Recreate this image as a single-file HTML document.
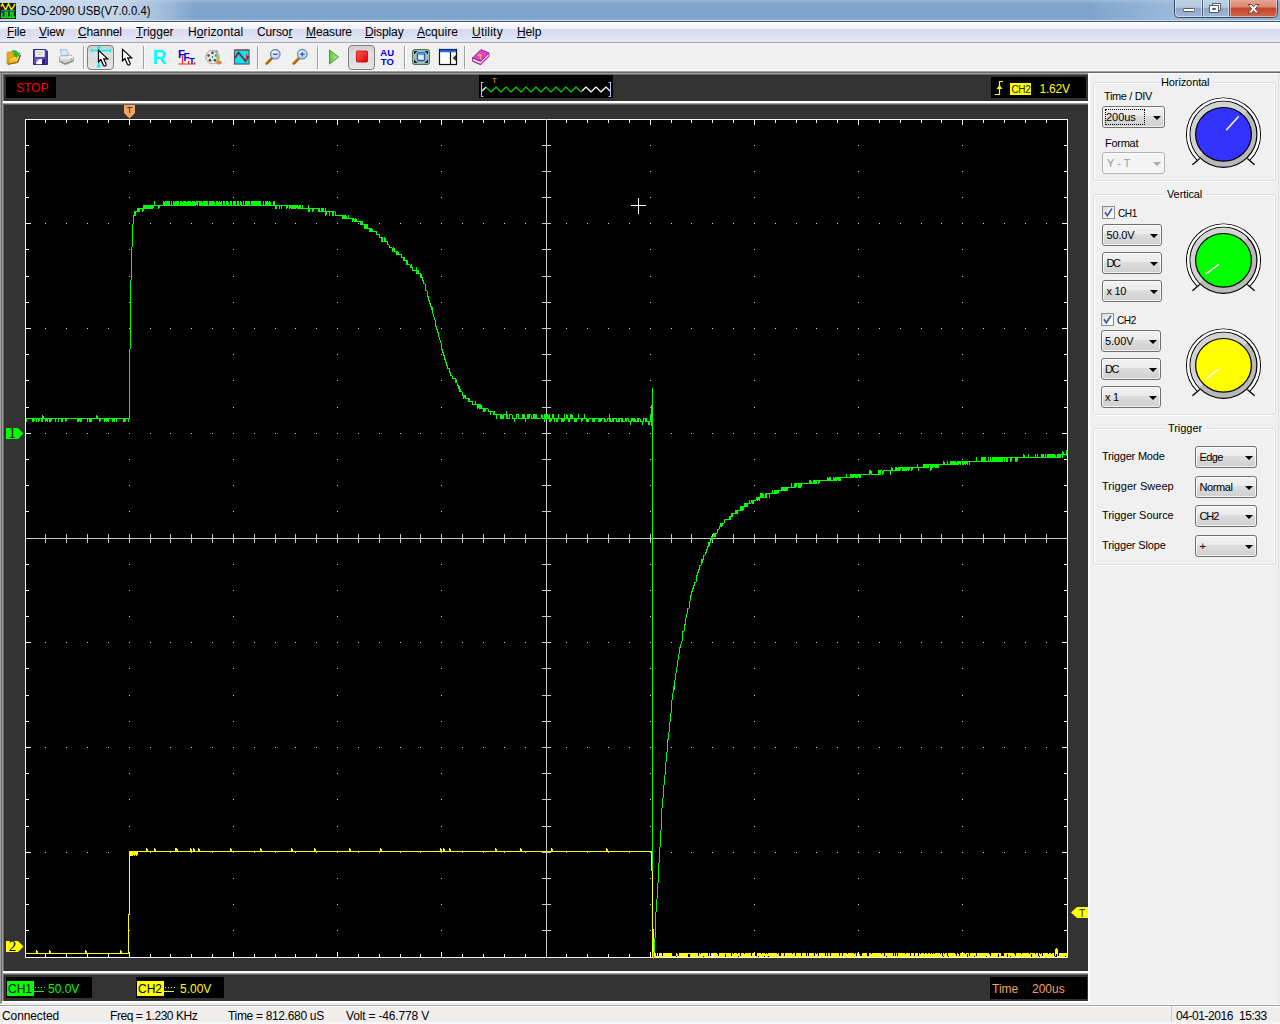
<!DOCTYPE html>
<html lang="en">
<head>
<meta charset="utf-8">
<title>DSO-2090 USB(V7.0.0.4)</title>
<style>
*{box-sizing:border-box;margin:0;padding:0}
html,body{width:1280px;height:1024px;overflow:hidden;background:#f0f0f0;font-family:"Liberation Sans",sans-serif;font-size:12px;color:#000}
.abs{position:absolute}
#titlebar{position:absolute;left:0;top:0;width:1280px;height:22px;background:linear-gradient(#9dbadb 0,#86a9cf 12%,#7fa4cc 25%,#7fa4cc 88%,#cfdcee 93%,#cfdcee 95%,#46586f 96%);}
#titleglow{position:absolute;left:0;top:0;width:195px;height:20px;background:linear-gradient(90deg,rgba(208,223,240,.8) 0,rgba(208,223,240,.85) 60%,rgba(208,223,240,.5) 80%,rgba(208,223,240,0) 100%)}
#titleglow2{position:absolute;left:1090px;top:0;width:190px;height:20px;background:linear-gradient(100deg,rgba(190,212,234,0) 0,rgba(190,212,234,.45) 45%,rgba(175,200,228,.35) 70%,rgba(175,200,228,.3) 100%)}
#title{position:absolute;left:21px;top:3px;font-size:13px;line-height:16px;white-space:nowrap;transform:scaleX(.87);transform-origin:0 0}
#menubar{position:absolute;left:0;top:22px;width:1280px;height:21px;background:linear-gradient(#fdfdfe 0,#f1f3fa 35%,#d9dbee 36%,#dde0f1 70%,#e6e9f6 100%);border-bottom:1px solid #a8a8a8}
#menubar span{position:absolute;top:3px;line-height:15px;font-size:12px;white-space:nowrap;letter-spacing:-.12px}
#menubar u{text-decoration:underline;text-underline-offset:1px}
#toolbar{position:absolute;left:0;top:43px;width:1280px;height:28px;background:#f0f0f0}
.sep{position:absolute;top:3px;width:2px;height:23px;background:linear-gradient(90deg,#a0a0a0 50%,#fff 50%)}
.pressed{position:absolute;top:2px;width:27px;height:25px;border:1px solid #7f7f7f;border-radius:4px;background:linear-gradient(#cfcfcf,#e3e3e3 45%,#dadada 50%,#e6e6e6)}
.ico{position:absolute;top:5px;width:18px;height:18px}
#scope{position:absolute;left:0;top:73px;width:1088px;height:928px;background:#333}
.blk{position:absolute;background:#000}
.sepw{position:absolute;left:3px;width:1085px;height:4px;background:linear-gradient(#fff 0,#fff 50%,#a0a0a0 50%,#a0a0a0 75%,#606060 75%)}
#panel{position:absolute;left:1088px;top:73px;width:192px;height:931px;background:#f0f0f0}
.gb{position:absolute;border:1px solid #d5dfe5;border-radius:3px}
.gbw{position:absolute;border:1px solid #fff;border-radius:3px}
.gbt{position:absolute;font-size:11px;line-height:13px;background:#f0f0f0;padding:0 2px;white-space:nowrap}
.lbl{position:absolute;font-size:11px;line-height:13px;white-space:nowrap}
.cb{position:absolute;height:22px;border:1px solid #707070;border-radius:3px;background:linear-gradient(#f2f2f2 0,#ebebeb 43%,#dddddd 47%,#cfcfcf 100%);box-shadow:inset 0 0 0 1px rgba(255,255,255,.75);font-size:11px;line-height:13px}
.cb b{position:absolute;left:4px;top:4px;font-weight:normal;white-space:nowrap}
.cb i{position:absolute;right:3.5px;top:9px;width:0;height:0;border-left:4px solid transparent;border-right:4px solid transparent;border-top:4px solid #000}
.cb.dis{background:#f4f4f4;border-color:#adb2b5;color:#9a9a9a}
.cb.dis i{border-top-color:#a8a8a8}
.chk{position:absolute;width:13px;height:13px;border:1px solid #8e8f8f;background:linear-gradient(135deg,#d6d9dc,#f4f5f6 60%,#fff)}
#status{position:absolute;left:0;top:1006px;width:1280px;height:18px;background:#f0eded;border-top:1px solid #fff}
#status span{position:absolute;top:2px;line-height:15px;font-size:12px;white-space:nowrap}
.sc{position:absolute;font-size:12px;line-height:14px;white-space:nowrap}
</style>
</head>
<body>
<!-- ===== title bar ===== -->
<div id="titlebar">
 <div id="titleglow"></div><div id="titleglow2"></div>
 <svg class="abs" style="left:0;top:3px" width="16" height="16" viewBox="0 0 16 16">
  <rect width="16" height="16" fill="#1a1a1a"/>
  <polyline points="1,3.500 2.500,1 5.500,7 8.500,1 11.500,7 15,1" fill="none" stroke="#e6e600" stroke-width="1.500"/>
  <rect x="1" y="7" width="14" height="1.500" fill="#168a8a"/>
  <path d="M1.800 9.500V14.300H5.300V9.500H7.300V14.300H10.800V9.500H12.800V14.300H15" fill="none" stroke="#14e014" stroke-width="1.700"/>
 </svg>
 <div id="title">DSO-2090 USB(V7.0.0.4)</div>
 <svg class="abs" style="left:1170px;top:0" width="110" height="22" viewBox="1170 0 110 22">
 <defs>
  <linearGradient id="wb1" x1="0" y1="0" x2="0" y2="1"><stop offset="0" stop-color="#c3d3e6"/><stop offset=".45" stop-color="#b4c7de"/><stop offset=".5" stop-color="#8fa9c8"/><stop offset="1" stop-color="#9fb8d6"/></linearGradient>
  <linearGradient id="wb2" x1="0" y1="0" x2="0" y2="1"><stop offset="0" stop-color="#e9a99c"/><stop offset=".45" stop-color="#d98672"/><stop offset=".5" stop-color="#c5452a"/><stop offset="1" stop-color="#d0674a"/></linearGradient>
 </defs>
 <path d="M1174.500 -1V13.500Q1174.500 17.500 1178.500 17.500H1273.500Q1277.500 17.500 1277.500 13.500V-1z" fill="url(#wb1)" stroke="#3a4a60" stroke-width="1"/>
 <path d="M1229.500 -1V17H1273.500Q1277 17 1277 13.500V-1z" fill="url(#wb2)"/>
 <path d="M1202.500 0V17M1229.500 0V17" stroke="#4a5a72" stroke-width="1"/>
 <path d="M1175.500 0V13.500Q1175.500 16.500 1178.500 16.500H1273.500Q1276.500 16.500 1276.500 13.500V0M1203.500 0V16.500M1230.500 0V16.500M1201.500 0V16.500M1228.500 0V16.500" fill="none" stroke="rgba(255,255,255,.45)" stroke-width="1"/>
 <rect x="1183.500" y="8.500" width="11" height="3" rx="1" fill="#fff" stroke="#535a66" stroke-width="1"/>
 <path d="M1212.500 3.500h8v7h-2v-5h-6z" fill="#fff" stroke="#535a66" stroke-width="1"/>
 <path d="M1209.500 5.500h9v7h-9zM1212.500 8.500h3v1h-3z" fill="#fff" stroke="#535a66" stroke-width="1" fill-rule="evenodd"/>
 <path d="M1248 4.500h3.500l2 2.400l2-2.400h3.500l-3.700 4.300l3.700 4.200h-3.500l-2-2.400l-2 2.400h-3.500l3.700-4.200z" fill="#fff" stroke="#5a3a3a" stroke-width=".9"/>
</svg>
</div>
<!-- ===== menu bar ===== -->
<div id="menubar">
 <span style="left:7px"><u>F</u>ile</span>
 <span style="left:39px"><u>V</u>iew</span>
 <span style="left:78px"><u>C</u>hannel</span>
 <span style="left:136px;letter-spacing:0"><u>T</u>rigger</span>
 <span style="left:188px;letter-spacing:.12px">H<u>o</u>rizontal</span>
 <span style="left:257px">Curso<u>r</u></span>
 <span style="left:306px"><u>M</u>easure</span>
 <span style="left:365px"><u>D</u>isplay</span>
 <span style="left:417px;letter-spacing:.03px"><u>A</u>cquire</span>
 <span style="left:472px;letter-spacing:.22px"><u>U</u>tility</span>
 <span style="left:517px"><u>H</u>elp</span>
</div>
<!-- ===== toolbar ===== -->
<div id="toolbar">
 <div class="sep" style="left:83px"></div>
 <div class="pressed" style="left:87px"></div>
 <div class="sep" style="left:143px"></div>
 <div class="sep" style="left:257px"></div>
 <div class="sep" style="left:317px"></div>
 <div class="pressed" style="left:348px"></div>
 <div class="sep" style="left:404px"></div>
 <div class="sep" style="left:464px"></div>
 <svg class="abs" style="left:0;top:0" width="500" height="28" viewBox="0 43 500 28">
 <defs>
  <linearGradient id="fy" x1="0" y1="0" x2="0" y2="1"><stop offset="0" stop-color="#ffe96a"/><stop offset="1" stop-color="#e9a800"/></linearGradient>
  <linearGradient id="pg" x1="0" y1="0" x2="0" y2="1"><stop offset="0" stop-color="#f4f4f4"/><stop offset="1" stop-color="#b9bcc0"/></linearGradient>
  <radialGradient id="mg" cx=".4" cy=".35" r=".7"><stop offset="0" stop-color="#fff"/><stop offset="1" stop-color="#a8c8ee"/></radialGradient>
  <linearGradient id="pl" x1="0" y1="0" x2="1" y2="0"><stop offset="0" stop-color="#58c83c"/><stop offset="1" stop-color="#b8f090"/></linearGradient>
  <linearGradient id="rd" x1="0" y1="0" x2="1" y2="1"><stop offset="0" stop-color="#ff5a5a"/><stop offset="1" stop-color="#e00000"/></linearGradient>
 </defs>
 <!-- open -->
 <path d="M7 52.800q0-.8 .8-.8h3.400l1 1h3.300v4.500l-8.500 6.500z" fill="#e8ac10" stroke="#c08600" stroke-width=".6"/>
 <path d="M7.600 64.300l1.700-6.400l11-2.800l-2.800 7.300z" fill="url(#fy)" stroke="#9a6c00" stroke-width=".5"/>
 <path d="M17.600 62.600l2.900-7.500" stroke="#2a1c00" stroke-width=".9"/>
 <path d="M8 64.400l9.500-1.900" stroke="#6a4a00" stroke-width=".8"/>
 <path d="M11.300 51.600q4.700-2.700 7.400 1.900l1.700-.6l-3.900 4.600l-3-3.300l1.900-.2q-1.200-2-4.100-2.400z" fill="#28c028" stroke="#168a16" stroke-width=".5"/>
 <!-- save -->
 <path d="M33.500 49.500h12.300l1.500 1.500v13.400h-13.800z" fill="#5a48b4" stroke="#2c2c8c" stroke-width="1"/>
 <path d="M47 51.500v13h-13" fill="none" stroke="#22225e" stroke-width="1"/>
 <rect x="35.200" y="50.100" width="9.400" height="6.800" fill="#f6f6f6"/>
 <path d="M37.200 52.400h5.600M37.200 54.400h5.600" stroke="#b8b8b8" stroke-width=".9"/>
 <rect x="36.200" y="59" width="5.800" height="5.200" fill="#fff"/>
 <path d="M36.200 59h3.500l-3.500 3.500z" fill="#8c84d4"/>
 <rect x="42.400" y="59" width="2.600" height="5.200" fill="#2a1a90"/>
 <!-- print -->
 <path d="M60.400 49.400h6.400l1.700 5.700l-7.100 .5z" fill="#d4e8fb" stroke="#8c9cc8" stroke-width=".6"/>
 <path d="M59.400 58q0-1.500 1.500-1.900l9.800-1q1.200 0 2.600 2.200v4.200l-8.200 3.200l-5.700-3z" fill="url(#pg)" stroke="#8a8e9a" stroke-width=".6"/>
 <path d="M59.600 61.200l5.600 2.700l8-3.200" fill="none" stroke="#70747c" stroke-width=".9"/>
 <path d="M60.500 57l5.500 1.600l7-2" fill="none" stroke="#fff" stroke-width=".8"/>
 <rect x="70.700" y="58.800" width="1.500" height="1.500" fill="#4cd04c"/>
 <!-- cursor cross -->
 <path d="M91 50.500h20M91.500 49v3M110.500 49v3" stroke="#00f4f4" stroke-width="1.500" fill="none"/>
 <path d="M98.800 47v20M97 47.500h3.600M97 66.500h3.600" stroke="#00f4f4" stroke-width="1.800" fill="none"/>
 <path d="M98.500 50.300V61.800L100.900 59.600L103.400 65.300Q104.300 66.400 105.600 65.700Q106.600 65 106 63.800L103.700 58.900H107.700Z" fill="#fff" stroke="#000" stroke-width="1.200"/>
 <path d="M122.500 49.300V60.800L124.900 58.600L127.400 64.300Q128.300 65.400 129.600 64.700Q130.600 64 130 62.800L127.700 57.900H131.700Z" fill="#fff" stroke="#000" stroke-width="1.200"/>
 <!-- R -->
 <text x="152.500" y="64.300" font-family="Liberation Sans,sans-serif" font-weight="bold" font-size="19.500" fill="#00ffff">R</text>
 <!-- FFT -->
 <g font-family="Liberation Sans,sans-serif" font-weight="bold" fill="#0000e6">
  <text x="178" y="57.500" font-size="11.500">F</text><text x="183.500" y="61" font-size="10">F</text><text x="189" y="63.500" font-size="9.500">T</text>
 </g>
 <path d="M178.500 64h17M182.500 64v-9M188.500 64v-3M194.500 64v-2" stroke="#ff2020" stroke-width="1.1" fill="none"/>
 <!-- film -->
 <circle cx="212.500" cy="57" r="6.800" fill="#e4e4e4" stroke="#9a9a9a" stroke-width=".8"/>
 <g fill="#444"><circle cx="212.500" cy="52.800" r="1.300"/><circle cx="208.600" cy="55.500" r="1.300"/><circle cx="210" cy="60.200" r="1.300"/><circle cx="215" cy="60.200" r="1.300"/><circle cx="216.400" cy="55.500" r="1.300"/><circle cx="212.500" cy="57" r=".8"/></g>
 <path d="M216 52q2.500 1 2.500 4.500l1.500 5.500l-3 2z" fill="#8ad04a"/>
 <path d="M216 62q3-2.500 6 0q0 2.500-3.500 2.500q-2.500 0-2.500-2.500z" fill="#e88050"/>
 <circle cx="216.500" cy="51.500" r="1.600" fill="#8aa0e0"/>
 <!-- wave icon -->
 <rect x="234.500" y="50" width="14.500" height="14" fill="#00e8f0" stroke="#555a66" stroke-width="1.200"/>
 <path d="M234.500 50h14.500" stroke="#a04040" stroke-width="1"/>
 <path d="M235 58l3.500-5.500l7 8.500l3-5" fill="none" stroke="#3a3a3a" stroke-width="1.800"/>
 <path d="M236 57.500l2.500-3.500l7 8" fill="none" stroke="#ff2080" stroke-width=".8"/>
 <path d="M246.500 54v6" stroke="#ff2020" stroke-width="1"/>
 <!-- zoom out/in -->
 <g>
  <path d="M266.500 63.500l5.500-5.500" stroke="#c87800" stroke-width="2.600" stroke-linecap="round"/><path d="M267 64.300l5.200-5.200" stroke="#5a3a10" stroke-width=".8"/>
  <circle cx="275.300" cy="54.200" r="4.700" fill="url(#mg)" stroke="#6a88b4" stroke-width="1.300"/>
  <path d="M273 54.200h4.600" stroke="#3a6ac8" stroke-width="1.500"/>
  <path d="M293.500 63.500l5.500-5.500" stroke="#c87800" stroke-width="2.600" stroke-linecap="round"/><path d="M294 64.300l5.200-5.200" stroke="#5a3a10" stroke-width=".8"/>
  <circle cx="302.300" cy="54.200" r="4.700" fill="url(#mg)" stroke="#6a88b4" stroke-width="1.300"/>
  <path d="M300 54.200h4.600M302.300 51.900v4.600" stroke="#3a6ac8" stroke-width="1.500"/>
 </g>
 <!-- play -->
 <path d="M329.500 50l9 7l-9 7z" fill="url(#pl)" stroke="#3aa028" stroke-width="1"/>
 <!-- stop -->
 <rect x="356.500" y="51" width="11" height="11" rx="1" fill="url(#rd)" stroke="#c00000" stroke-width=".8"/>
 <!-- AUTO -->
 <g font-family="Liberation Sans,sans-serif" font-weight="bold" font-size="9.500" fill="#0000f0">
  <text x="380.300" y="56">AU</text><text x="380.800" y="64.500">TO</text>
 </g>
 <!-- fullscreen -->
 <rect x="412.500" y="49.500" width="17" height="15" rx="2" fill="#9cc0b0" stroke="#4a7060" stroke-width="1"/>
 <path d="M414 51h3.500l-3.500 3.500zM428 51h-3.500l3.500 3.500zM414 63h3.500l-3.500-3.500zM428 63h-3.500l3.500-3.500z" fill="#111"/>
 <rect x="417.500" y="53" width="7" height="7.500" rx="1" fill="#f4ece4" stroke="#1858e0" stroke-width="1.300"/>
 <rect x="418" y="53.500" width="6" height="1.600" fill="#58a8f8"/>
 <!-- window -->
 <rect x="439.500" y="49.500" width="17" height="15" fill="#fff" stroke="#111" stroke-width="1.200"/>
 <rect x="440" y="49.500" width="16" height="2.500" fill="#1c50e8"/>
 <path d="M440 52.200h16" stroke="#40d8f0" stroke-width=".8"/>
 <path d="M450.500 52v12.500" stroke="#111" stroke-width="1.200"/>
 <path d="M456 55l-3.500 3l3.500 3z" fill="#333"/>
 <!-- book -->
 <path d="M472.500 58l8.500-8.500l8 3.500l-8.500 8.500z" fill="#e838d8" stroke="#701870" stroke-width=".8"/>
 <path d="M472.500 58v3l8 3.500l8.500-8.500v-3l-8.500 8.500z" fill="#f0f0e0" stroke="#701870" stroke-width=".8"/>
 <path d="M472.500 61l8 3.500l8.500-8.500" fill="none" stroke="#c020b0" stroke-width="1.200"/>
 <text x="478" y="59" font-family="Liberation Sans,sans-serif" font-weight="bold" font-size="7" fill="#f0f000" transform="rotate(-20 480 57)">?</text>
</svg>
</div>
<div class="abs" style="left:0;top:70px;width:1280px;height:1px;background:#fbfbfb"></div>
<div class="abs" style="left:0;top:71px;width:1280px;height:1px;background:#a0a0a0"></div>
<div class="abs" style="left:0;top:72px;width:1280px;height:1px;background:#696969"></div>
<!-- ===== scope area ===== -->
<div id="scope">
 <div class="abs" style="left:0;top:0;width:1088px;height:1px;background:#a0a0a0"></div>
 <div class="abs" style="left:0;top:1px;width:1088px;height:1px;background:#666"></div>
 <div class="abs" style="left:0;top:2px;width:1088px;height:1px;background:#303030"></div>
 <div class="abs" style="left:0;top:0;width:1px;height:931px;background:#a0a0a0"></div>
 <div class="abs" style="left:1px;top:0;width:1px;height:930px;background:#696969"></div>
 <div class="abs" style="left:2px;top:0;width:1px;height:929px;background:#a0a0a0"></div>
 <div class="abs" style="left:3px;top:1px;width:1px;height:927px;background:#666"></div>
 <div class="abs" style="left:4px;top:2px;width:1px;height:926px;background:#303030"></div>
</div>
<div class="blk" style="left:6px;top:77px;width:50px;height:21px"></div>
<div class="sc" style="left:16px;top:81px;color:#f00">STOP</div>
<div class="blk" style="left:479px;top:75px;width:134px;height:23px"></div>
<div class="blk" style="left:991px;top:77px;width:95px;height:21px"></div>
<div class="sepw" style="top:101px"></div>
<div class="sepw" style="top:971px"></div>
<div class="blk" style="left:6px;top:977px;width:86px;height:21px"></div>
<div class="blk" style="left:136px;top:977px;width:88px;height:21px"></div>
<div class="blk" style="left:990px;top:977px;width:97px;height:22px"></div>
<!-- scope graphics -->
<svg class="abs" style="left:0;top:0" width="1090" height="1004" viewBox="0 0 1090 1004">
 <rect x="25" y="119" width="1043" height="839" fill="#000"/>
 <g shape-rendering="crispEdges">
  <path d="M25 119h1043v1h-1043zM25 957h1043v1h-1043zM25 119h1v839h-1zM1067 119h1v839h-1zM45 119h1v4h-1zM45 954h1v4h-1zM66 119h1v4h-1zM66 954h1v4h-1zM87 119h1v4h-1zM87 954h1v4h-1zM108 119h1v4h-1zM108 954h1v4h-1zM129 119h1v6h-1zM129 952h1v6h-1zM150 119h1v4h-1zM150 954h1v4h-1zM170 119h1v4h-1zM170 954h1v4h-1zM191 119h1v4h-1zM191 954h1v4h-1zM212 119h1v4h-1zM212 954h1v4h-1zM233 119h1v6h-1zM233 952h1v6h-1zM254 119h1v4h-1zM254 954h1v4h-1zM275 119h1v4h-1zM275 954h1v4h-1zM295 119h1v4h-1zM295 954h1v4h-1zM316 119h1v4h-1zM316 954h1v4h-1zM337 119h1v6h-1zM337 952h1v6h-1zM358 119h1v4h-1zM358 954h1v4h-1zM379 119h1v4h-1zM379 954h1v4h-1zM400 119h1v4h-1zM400 954h1v4h-1zM420 119h1v4h-1zM420 954h1v4h-1zM441 119h1v6h-1zM441 952h1v6h-1zM462 119h1v4h-1zM462 954h1v4h-1zM483 119h1v4h-1zM483 954h1v4h-1zM504 119h1v4h-1zM504 954h1v4h-1zM525 119h1v4h-1zM525 954h1v4h-1zM546 119h1v6h-1zM546 952h1v6h-1zM566 119h1v4h-1zM566 954h1v4h-1zM587 119h1v4h-1zM587 954h1v4h-1zM608 119h1v4h-1zM608 954h1v4h-1zM629 119h1v4h-1zM629 954h1v4h-1zM650 119h1v6h-1zM650 952h1v6h-1zM671 119h1v4h-1zM671 954h1v4h-1zM691 119h1v4h-1zM691 954h1v4h-1zM712 119h1v4h-1zM712 954h1v4h-1zM733 119h1v4h-1zM733 954h1v4h-1zM754 119h1v6h-1zM754 952h1v6h-1zM775 119h1v4h-1zM775 954h1v4h-1zM796 119h1v4h-1zM796 954h1v4h-1zM816 119h1v4h-1zM816 954h1v4h-1zM837 119h1v4h-1zM837 954h1v4h-1zM858 119h1v6h-1zM858 952h1v6h-1zM879 119h1v4h-1zM879 954h1v4h-1zM900 119h1v4h-1zM900 954h1v4h-1zM921 119h1v4h-1zM921 954h1v4h-1zM941 119h1v4h-1zM941 954h1v4h-1zM962 119h1v6h-1zM962 952h1v6h-1zM983 119h1v4h-1zM983 954h1v4h-1zM1004 119h1v4h-1zM1004 954h1v4h-1zM1025 119h1v4h-1zM1025 954h1v4h-1zM1046 119h1v4h-1zM1046 954h1v4h-1zM25 145h4v1h-4zM1064 145h4v1h-4zM25 171h4v1h-4zM1064 171h4v1h-4zM25 197h4v1h-4zM1064 197h4v1h-4zM25 223h6v1h-6zM1062 223h6v1h-6zM25 249h4v1h-4zM1064 249h4v1h-4zM25 276h4v1h-4zM1064 276h4v1h-4zM25 302h4v1h-4zM1064 302h4v1h-4zM25 328h6v1h-6zM1062 328h6v1h-6zM25 354h4v1h-4zM1064 354h4v1h-4zM25 380h4v1h-4zM1064 380h4v1h-4zM25 407h4v1h-4zM1064 407h4v1h-4zM25 433h6v1h-6zM1062 433h6v1h-6zM25 459h4v1h-4zM1064 459h4v1h-4zM25 485h4v1h-4zM1064 485h4v1h-4zM25 511h4v1h-4zM1064 511h4v1h-4zM25 538h6v1h-6zM1062 538h6v1h-6zM25 564h4v1h-4zM1064 564h4v1h-4zM25 590h4v1h-4zM1064 590h4v1h-4zM25 616h4v1h-4zM1064 616h4v1h-4zM25 642h6v1h-6zM1062 642h6v1h-6zM25 668h4v1h-4zM1064 668h4v1h-4zM25 695h4v1h-4zM1064 695h4v1h-4zM25 721h4v1h-4zM1064 721h4v1h-4zM25 747h6v1h-6zM1062 747h6v1h-6zM25 773h4v1h-4zM1064 773h4v1h-4zM25 799h4v1h-4zM1064 799h4v1h-4zM25 826h4v1h-4zM1064 826h4v1h-4zM25 852h6v1h-6zM1062 852h6v1h-6zM25 878h4v1h-4zM1064 878h4v1h-4zM25 904h4v1h-4zM1064 904h4v1h-4zM25 930h4v1h-4zM1064 930h4v1h-4z" fill="#f4f4f4"/>
  <path d="M25 538h1043v1h-1043zM546 119h1v839h-1zM45 534h1v9h-1zM66 534h1v9h-1zM87 534h1v9h-1zM108 534h1v9h-1zM129 534h1v9h-1zM150 534h1v9h-1zM170 534h1v9h-1zM191 534h1v9h-1zM212 534h1v9h-1zM233 534h1v9h-1zM254 534h1v9h-1zM275 534h1v9h-1zM295 534h1v9h-1zM316 534h1v9h-1zM337 534h1v9h-1zM358 534h1v9h-1zM379 534h1v9h-1zM400 534h1v9h-1zM420 534h1v9h-1zM441 534h1v9h-1zM462 534h1v9h-1zM483 534h1v9h-1zM504 534h1v9h-1zM525 534h1v9h-1zM546 534h1v9h-1zM566 534h1v9h-1zM587 534h1v9h-1zM608 534h1v9h-1zM629 534h1v9h-1zM650 534h1v9h-1zM671 534h1v9h-1zM691 534h1v9h-1zM712 534h1v9h-1zM733 534h1v9h-1zM754 534h1v9h-1zM775 534h1v9h-1zM796 534h1v9h-1zM816 534h1v9h-1zM837 534h1v9h-1zM858 534h1v9h-1zM879 534h1v9h-1zM900 534h1v9h-1zM921 534h1v9h-1zM941 534h1v9h-1zM962 534h1v9h-1zM983 534h1v9h-1zM1004 534h1v9h-1zM1025 534h1v9h-1zM1046 534h1v9h-1zM542 145h9v1h-9zM542 171h9v1h-9zM542 197h9v1h-9zM542 223h9v1h-9zM542 249h9v1h-9zM542 276h9v1h-9zM542 302h9v1h-9zM542 328h9v1h-9zM542 354h9v1h-9zM542 380h9v1h-9zM542 407h9v1h-9zM542 433h9v1h-9zM542 459h9v1h-9zM542 485h9v1h-9zM542 511h9v1h-9zM542 538h9v1h-9zM542 564h9v1h-9zM542 590h9v1h-9zM542 616h9v1h-9zM542 642h9v1h-9zM542 668h9v1h-9zM542 695h9v1h-9zM542 721h9v1h-9zM542 747h9v1h-9zM542 773h9v1h-9zM542 799h9v1h-9zM542 826h9v1h-9zM542 852h9v1h-9zM542 878h9v1h-9zM542 904h9v1h-9zM542 930h9v1h-9z" fill="#c8c8c8"/>
  <path d="M45 223h1v1h-1zM66 223h1v1h-1zM87 223h1v1h-1zM108 223h1v1h-1zM129 223h1v1h-1zM150 223h1v1h-1zM170 223h1v1h-1zM191 223h1v1h-1zM212 223h1v1h-1zM233 223h1v1h-1zM254 223h1v1h-1zM275 223h1v1h-1zM295 223h1v1h-1zM316 223h1v1h-1zM337 223h1v1h-1zM358 223h1v1h-1zM379 223h1v1h-1zM400 223h1v1h-1zM420 223h1v1h-1zM441 223h1v1h-1zM462 223h1v1h-1zM483 223h1v1h-1zM504 223h1v1h-1zM525 223h1v1h-1zM546 223h1v1h-1zM566 223h1v1h-1zM587 223h1v1h-1zM608 223h1v1h-1zM629 223h1v1h-1zM650 223h1v1h-1zM671 223h1v1h-1zM691 223h1v1h-1zM712 223h1v1h-1zM733 223h1v1h-1zM754 223h1v1h-1zM775 223h1v1h-1zM796 223h1v1h-1zM816 223h1v1h-1zM837 223h1v1h-1zM858 223h1v1h-1zM879 223h1v1h-1zM900 223h1v1h-1zM921 223h1v1h-1zM941 223h1v1h-1zM962 223h1v1h-1zM983 223h1v1h-1zM1004 223h1v1h-1zM1025 223h1v1h-1zM1046 223h1v1h-1zM45 328h1v1h-1zM66 328h1v1h-1zM87 328h1v1h-1zM108 328h1v1h-1zM129 328h1v1h-1zM150 328h1v1h-1zM170 328h1v1h-1zM191 328h1v1h-1zM212 328h1v1h-1zM233 328h1v1h-1zM254 328h1v1h-1zM275 328h1v1h-1zM295 328h1v1h-1zM316 328h1v1h-1zM337 328h1v1h-1zM358 328h1v1h-1zM379 328h1v1h-1zM400 328h1v1h-1zM420 328h1v1h-1zM441 328h1v1h-1zM462 328h1v1h-1zM483 328h1v1h-1zM504 328h1v1h-1zM525 328h1v1h-1zM546 328h1v1h-1zM566 328h1v1h-1zM587 328h1v1h-1zM608 328h1v1h-1zM629 328h1v1h-1zM650 328h1v1h-1zM671 328h1v1h-1zM691 328h1v1h-1zM712 328h1v1h-1zM733 328h1v1h-1zM754 328h1v1h-1zM775 328h1v1h-1zM796 328h1v1h-1zM816 328h1v1h-1zM837 328h1v1h-1zM858 328h1v1h-1zM879 328h1v1h-1zM900 328h1v1h-1zM921 328h1v1h-1zM941 328h1v1h-1zM962 328h1v1h-1zM983 328h1v1h-1zM1004 328h1v1h-1zM1025 328h1v1h-1zM1046 328h1v1h-1zM45 433h1v1h-1zM66 433h1v1h-1zM87 433h1v1h-1zM108 433h1v1h-1zM129 433h1v1h-1zM150 433h1v1h-1zM170 433h1v1h-1zM191 433h1v1h-1zM212 433h1v1h-1zM233 433h1v1h-1zM254 433h1v1h-1zM275 433h1v1h-1zM295 433h1v1h-1zM316 433h1v1h-1zM337 433h1v1h-1zM358 433h1v1h-1zM379 433h1v1h-1zM400 433h1v1h-1zM420 433h1v1h-1zM441 433h1v1h-1zM462 433h1v1h-1zM483 433h1v1h-1zM504 433h1v1h-1zM525 433h1v1h-1zM546 433h1v1h-1zM566 433h1v1h-1zM587 433h1v1h-1zM608 433h1v1h-1zM629 433h1v1h-1zM650 433h1v1h-1zM671 433h1v1h-1zM691 433h1v1h-1zM712 433h1v1h-1zM733 433h1v1h-1zM754 433h1v1h-1zM775 433h1v1h-1zM796 433h1v1h-1zM816 433h1v1h-1zM837 433h1v1h-1zM858 433h1v1h-1zM879 433h1v1h-1zM900 433h1v1h-1zM921 433h1v1h-1zM941 433h1v1h-1zM962 433h1v1h-1zM983 433h1v1h-1zM1004 433h1v1h-1zM1025 433h1v1h-1zM1046 433h1v1h-1zM45 642h1v1h-1zM66 642h1v1h-1zM87 642h1v1h-1zM108 642h1v1h-1zM129 642h1v1h-1zM150 642h1v1h-1zM170 642h1v1h-1zM191 642h1v1h-1zM212 642h1v1h-1zM233 642h1v1h-1zM254 642h1v1h-1zM275 642h1v1h-1zM295 642h1v1h-1zM316 642h1v1h-1zM337 642h1v1h-1zM358 642h1v1h-1zM379 642h1v1h-1zM400 642h1v1h-1zM420 642h1v1h-1zM441 642h1v1h-1zM462 642h1v1h-1zM483 642h1v1h-1zM504 642h1v1h-1zM525 642h1v1h-1zM546 642h1v1h-1zM566 642h1v1h-1zM587 642h1v1h-1zM608 642h1v1h-1zM629 642h1v1h-1zM650 642h1v1h-1zM671 642h1v1h-1zM691 642h1v1h-1zM712 642h1v1h-1zM733 642h1v1h-1zM754 642h1v1h-1zM775 642h1v1h-1zM796 642h1v1h-1zM816 642h1v1h-1zM837 642h1v1h-1zM858 642h1v1h-1zM879 642h1v1h-1zM900 642h1v1h-1zM921 642h1v1h-1zM941 642h1v1h-1zM962 642h1v1h-1zM983 642h1v1h-1zM1004 642h1v1h-1zM1025 642h1v1h-1zM1046 642h1v1h-1zM45 747h1v1h-1zM66 747h1v1h-1zM87 747h1v1h-1zM108 747h1v1h-1zM129 747h1v1h-1zM150 747h1v1h-1zM170 747h1v1h-1zM191 747h1v1h-1zM212 747h1v1h-1zM233 747h1v1h-1zM254 747h1v1h-1zM275 747h1v1h-1zM295 747h1v1h-1zM316 747h1v1h-1zM337 747h1v1h-1zM358 747h1v1h-1zM379 747h1v1h-1zM400 747h1v1h-1zM420 747h1v1h-1zM441 747h1v1h-1zM462 747h1v1h-1zM483 747h1v1h-1zM504 747h1v1h-1zM525 747h1v1h-1zM546 747h1v1h-1zM566 747h1v1h-1zM587 747h1v1h-1zM608 747h1v1h-1zM629 747h1v1h-1zM650 747h1v1h-1zM671 747h1v1h-1zM691 747h1v1h-1zM712 747h1v1h-1zM733 747h1v1h-1zM754 747h1v1h-1zM775 747h1v1h-1zM796 747h1v1h-1zM816 747h1v1h-1zM837 747h1v1h-1zM858 747h1v1h-1zM879 747h1v1h-1zM900 747h1v1h-1zM921 747h1v1h-1zM941 747h1v1h-1zM962 747h1v1h-1zM983 747h1v1h-1zM1004 747h1v1h-1zM1025 747h1v1h-1zM1046 747h1v1h-1zM45 852h1v1h-1zM66 852h1v1h-1zM87 852h1v1h-1zM108 852h1v1h-1zM129 852h1v1h-1zM150 852h1v1h-1zM170 852h1v1h-1zM191 852h1v1h-1zM212 852h1v1h-1zM233 852h1v1h-1zM254 852h1v1h-1zM275 852h1v1h-1zM295 852h1v1h-1zM316 852h1v1h-1zM337 852h1v1h-1zM358 852h1v1h-1zM379 852h1v1h-1zM400 852h1v1h-1zM420 852h1v1h-1zM441 852h1v1h-1zM462 852h1v1h-1zM483 852h1v1h-1zM504 852h1v1h-1zM525 852h1v1h-1zM546 852h1v1h-1zM566 852h1v1h-1zM587 852h1v1h-1zM608 852h1v1h-1zM629 852h1v1h-1zM650 852h1v1h-1zM671 852h1v1h-1zM691 852h1v1h-1zM712 852h1v1h-1zM733 852h1v1h-1zM754 852h1v1h-1zM775 852h1v1h-1zM796 852h1v1h-1zM816 852h1v1h-1zM837 852h1v1h-1zM858 852h1v1h-1zM879 852h1v1h-1zM900 852h1v1h-1zM921 852h1v1h-1zM941 852h1v1h-1zM962 852h1v1h-1zM983 852h1v1h-1zM1004 852h1v1h-1zM1025 852h1v1h-1zM1046 852h1v1h-1zM129 145h1v1h-1zM129 171h1v1h-1zM129 197h1v1h-1zM129 249h1v1h-1zM129 276h1v1h-1zM129 302h1v1h-1zM129 354h1v1h-1zM129 380h1v1h-1zM129 407h1v1h-1zM129 459h1v1h-1zM129 485h1v1h-1zM129 511h1v1h-1zM129 564h1v1h-1zM129 590h1v1h-1zM129 616h1v1h-1zM129 668h1v1h-1zM129 695h1v1h-1zM129 721h1v1h-1zM129 773h1v1h-1zM129 799h1v1h-1zM129 826h1v1h-1zM129 878h1v1h-1zM129 904h1v1h-1zM129 930h1v1h-1zM233 145h1v1h-1zM233 171h1v1h-1zM233 197h1v1h-1zM233 249h1v1h-1zM233 276h1v1h-1zM233 302h1v1h-1zM233 354h1v1h-1zM233 380h1v1h-1zM233 407h1v1h-1zM233 459h1v1h-1zM233 485h1v1h-1zM233 511h1v1h-1zM233 564h1v1h-1zM233 590h1v1h-1zM233 616h1v1h-1zM233 668h1v1h-1zM233 695h1v1h-1zM233 721h1v1h-1zM233 773h1v1h-1zM233 799h1v1h-1zM233 826h1v1h-1zM233 878h1v1h-1zM233 904h1v1h-1zM233 930h1v1h-1zM337 145h1v1h-1zM337 171h1v1h-1zM337 197h1v1h-1zM337 249h1v1h-1zM337 276h1v1h-1zM337 302h1v1h-1zM337 354h1v1h-1zM337 380h1v1h-1zM337 407h1v1h-1zM337 459h1v1h-1zM337 485h1v1h-1zM337 511h1v1h-1zM337 564h1v1h-1zM337 590h1v1h-1zM337 616h1v1h-1zM337 668h1v1h-1zM337 695h1v1h-1zM337 721h1v1h-1zM337 773h1v1h-1zM337 799h1v1h-1zM337 826h1v1h-1zM337 878h1v1h-1zM337 904h1v1h-1zM337 930h1v1h-1zM441 145h1v1h-1zM441 171h1v1h-1zM441 197h1v1h-1zM441 249h1v1h-1zM441 276h1v1h-1zM441 302h1v1h-1zM441 354h1v1h-1zM441 380h1v1h-1zM441 407h1v1h-1zM441 459h1v1h-1zM441 485h1v1h-1zM441 511h1v1h-1zM441 564h1v1h-1zM441 590h1v1h-1zM441 616h1v1h-1zM441 668h1v1h-1zM441 695h1v1h-1zM441 721h1v1h-1zM441 773h1v1h-1zM441 799h1v1h-1zM441 826h1v1h-1zM441 878h1v1h-1zM441 904h1v1h-1zM441 930h1v1h-1zM650 145h1v1h-1zM650 171h1v1h-1zM650 197h1v1h-1zM650 249h1v1h-1zM650 276h1v1h-1zM650 302h1v1h-1zM650 354h1v1h-1zM650 380h1v1h-1zM650 407h1v1h-1zM650 459h1v1h-1zM650 485h1v1h-1zM650 511h1v1h-1zM650 564h1v1h-1zM650 590h1v1h-1zM650 616h1v1h-1zM650 668h1v1h-1zM650 695h1v1h-1zM650 721h1v1h-1zM650 773h1v1h-1zM650 799h1v1h-1zM650 826h1v1h-1zM650 878h1v1h-1zM650 904h1v1h-1zM650 930h1v1h-1zM754 145h1v1h-1zM754 171h1v1h-1zM754 197h1v1h-1zM754 249h1v1h-1zM754 276h1v1h-1zM754 302h1v1h-1zM754 354h1v1h-1zM754 380h1v1h-1zM754 407h1v1h-1zM754 459h1v1h-1zM754 485h1v1h-1zM754 511h1v1h-1zM754 564h1v1h-1zM754 590h1v1h-1zM754 616h1v1h-1zM754 668h1v1h-1zM754 695h1v1h-1zM754 721h1v1h-1zM754 773h1v1h-1zM754 799h1v1h-1zM754 826h1v1h-1zM754 878h1v1h-1zM754 904h1v1h-1zM754 930h1v1h-1zM858 145h1v1h-1zM858 171h1v1h-1zM858 197h1v1h-1zM858 249h1v1h-1zM858 276h1v1h-1zM858 302h1v1h-1zM858 354h1v1h-1zM858 380h1v1h-1zM858 407h1v1h-1zM858 459h1v1h-1zM858 485h1v1h-1zM858 511h1v1h-1zM858 564h1v1h-1zM858 590h1v1h-1zM858 616h1v1h-1zM858 668h1v1h-1zM858 695h1v1h-1zM858 721h1v1h-1zM858 773h1v1h-1zM858 799h1v1h-1zM858 826h1v1h-1zM858 878h1v1h-1zM858 904h1v1h-1zM858 930h1v1h-1zM962 145h1v1h-1zM962 171h1v1h-1zM962 197h1v1h-1zM962 249h1v1h-1zM962 276h1v1h-1zM962 302h1v1h-1zM962 354h1v1h-1zM962 380h1v1h-1zM962 407h1v1h-1zM962 459h1v1h-1zM962 485h1v1h-1zM962 511h1v1h-1zM962 564h1v1h-1zM962 590h1v1h-1zM962 616h1v1h-1zM962 668h1v1h-1zM962 695h1v1h-1zM962 721h1v1h-1zM962 773h1v1h-1zM962 799h1v1h-1zM962 826h1v1h-1zM962 878h1v1h-1zM962 904h1v1h-1zM962 930h1v1h-1z" fill="#c4c4c4"/>
  <path d="M26 953h1v1h-1zM27 953h1v1h-1zM28 953h1v1h-1zM29 953h1v1h-1zM30 953h1v1h-1zM31 953h1v1h-1zM32 953h1v1h-1zM33 953h1v1h-1zM34 953h1v1h-1zM35 953h1v1h-1zM36 950h1v4h-1zM37 951h1v3h-1zM38 953h1v1h-1zM39 953h1v1h-1zM40 953h1v1h-1zM41 953h1v1h-1zM42 953h1v1h-1zM43 953h1v1h-1zM44 953h1v1h-1zM45 953h1v1h-1zM46 953h1v1h-1zM47 953h1v1h-1zM48 953h1v1h-1zM49 950h1v4h-1zM50 951h1v3h-1zM51 953h1v1h-1zM52 953h1v1h-1zM53 953h1v1h-1zM54 953h1v1h-1zM55 953h1v1h-1zM56 953h1v1h-1zM57 953h1v1h-1zM58 953h1v1h-1zM59 953h1v1h-1zM60 953h1v1h-1zM61 953h1v1h-1zM62 953h1v1h-1zM63 953h1v1h-1zM64 953h1v1h-1zM65 953h1v1h-1zM66 953h1v1h-1zM67 953h1v1h-1zM68 953h1v1h-1zM69 953h1v1h-1zM70 953h1v1h-1zM71 953h1v1h-1zM72 953h1v1h-1zM73 953h1v1h-1zM74 953h1v1h-1zM75 953h1v1h-1zM76 953h1v1h-1zM77 953h1v1h-1zM78 953h1v1h-1zM79 953h1v1h-1zM80 953h1v1h-1zM81 953h1v1h-1zM82 953h1v1h-1zM83 953h1v1h-1zM84 953h1v1h-1zM85 950h1v4h-1zM86 951h1v3h-1zM87 953h1v1h-1zM88 953h1v1h-1zM89 953h1v1h-1zM90 953h1v1h-1zM91 953h1v1h-1zM92 953h1v1h-1zM93 953h1v1h-1zM94 953h1v1h-1zM95 953h1v1h-1zM96 953h1v1h-1zM97 953h1v1h-1zM98 953h1v1h-1zM99 953h1v1h-1zM100 953h1v1h-1zM101 953h1v1h-1zM102 953h1v1h-1zM103 953h1v1h-1zM104 953h1v1h-1zM105 953h1v1h-1zM106 953h1v1h-1zM107 953h1v1h-1zM108 953h1v1h-1zM109 953h1v1h-1zM110 953h1v1h-1zM111 953h1v1h-1zM112 953h1v1h-1zM113 953h1v1h-1zM114 953h1v1h-1zM115 953h1v1h-1zM116 953h1v1h-1zM117 953h1v1h-1zM118 953h1v1h-1zM119 953h1v1h-1zM120 950h1v4h-1zM121 951h1v3h-1zM122 953h1v1h-1zM123 953h1v1h-1zM124 953h1v1h-1zM125 953h1v1h-1zM126 953h1v1h-1zM127 953h1v1h-1zM128 914h1v40h-1zM129 851h1v64h-1zM130 851h1v5h-1zM131 851h1v5h-1zM132 851h1v5h-1zM133 851h1v4h-1zM134 851h1v5h-1zM135 851h1v4h-1zM136 851h1v5h-1zM137 851h1v4h-1zM138 851h1v1h-1zM139 851h1v1h-1zM140 851h1v1h-1zM141 851h1v1h-1zM142 851h1v1h-1zM143 851h1v1h-1zM144 851h1v1h-1zM145 851h1v1h-1zM146 848h1v4h-1zM147 849h1v3h-1zM148 851h1v1h-1zM149 851h1v1h-1zM150 851h1v1h-1zM151 851h1v1h-1zM152 851h1v1h-1zM153 851h1v1h-1zM154 848h1v4h-1zM155 849h1v3h-1zM156 851h1v1h-1zM157 851h1v1h-1zM158 851h1v1h-1zM159 851h1v1h-1zM160 851h1v1h-1zM161 851h1v1h-1zM162 851h1v1h-1zM163 851h1v1h-1zM164 851h1v1h-1zM165 851h1v1h-1zM166 851h1v1h-1zM167 851h1v1h-1zM168 851h1v1h-1zM169 851h1v1h-1zM170 851h1v1h-1zM171 851h1v1h-1zM172 851h1v1h-1zM173 851h1v1h-1zM174 851h1v1h-1zM175 848h1v4h-1zM176 848h1v4h-1zM177 849h1v3h-1zM178 851h1v1h-1zM179 851h1v1h-1zM180 851h1v1h-1zM181 851h1v1h-1zM182 851h1v1h-1zM183 851h1v1h-1zM184 851h1v1h-1zM185 851h1v1h-1zM186 851h1v1h-1zM187 851h1v1h-1zM188 851h1v1h-1zM189 851h1v1h-1zM190 848h1v4h-1zM191 849h1v3h-1zM192 851h1v1h-1zM193 848h1v4h-1zM194 849h1v3h-1zM195 851h1v1h-1zM196 851h1v1h-1zM197 851h1v1h-1zM198 848h1v4h-1zM199 849h1v3h-1zM200 851h1v1h-1zM201 851h1v1h-1zM202 851h1v1h-1zM203 851h1v1h-1zM204 851h1v1h-1zM205 851h1v1h-1zM206 851h1v1h-1zM207 851h1v1h-1zM208 851h1v1h-1zM209 851h1v1h-1zM210 851h1v1h-1zM211 851h1v1h-1zM212 851h1v1h-1zM213 851h1v1h-1zM214 851h1v1h-1zM215 851h1v1h-1zM216 851h1v1h-1zM217 851h1v1h-1zM218 851h1v1h-1zM219 851h1v1h-1zM220 851h1v1h-1zM221 851h1v1h-1zM222 851h1v1h-1zM223 851h1v1h-1zM224 851h1v1h-1zM225 851h1v1h-1zM226 851h1v1h-1zM227 851h1v1h-1zM228 851h1v1h-1zM229 851h1v1h-1zM230 848h1v4h-1zM231 849h1v3h-1zM232 851h1v1h-1zM233 851h1v1h-1zM234 851h1v1h-1zM235 851h1v1h-1zM236 851h1v1h-1zM237 851h1v1h-1zM238 851h1v1h-1zM239 851h1v1h-1zM240 851h1v1h-1zM241 851h1v1h-1zM242 851h1v1h-1zM243 851h1v1h-1zM244 851h1v1h-1zM245 851h1v1h-1zM246 851h1v1h-1zM247 851h1v1h-1zM248 851h1v1h-1zM249 851h1v1h-1zM250 851h1v1h-1zM251 851h1v1h-1zM252 851h1v1h-1zM253 851h1v1h-1zM254 851h1v1h-1zM255 851h1v1h-1zM256 851h1v1h-1zM257 851h1v1h-1zM258 851h1v1h-1zM259 851h1v1h-1zM260 848h1v4h-1zM261 849h1v3h-1zM262 851h1v1h-1zM263 851h1v1h-1zM264 851h1v1h-1zM265 851h1v1h-1zM266 851h1v1h-1zM267 851h1v1h-1zM268 851h1v1h-1zM269 851h1v1h-1zM270 851h1v1h-1zM271 851h1v1h-1zM272 851h1v1h-1zM273 851h1v1h-1zM274 851h1v1h-1zM275 851h1v1h-1zM276 851h1v1h-1zM277 851h1v1h-1zM278 851h1v1h-1zM279 851h1v1h-1zM280 851h1v1h-1zM281 851h1v1h-1zM282 851h1v1h-1zM283 851h1v1h-1zM284 851h1v1h-1zM285 851h1v1h-1zM286 851h1v1h-1zM287 851h1v1h-1zM288 851h1v1h-1zM289 851h1v1h-1zM290 851h1v1h-1zM291 848h1v4h-1zM292 849h1v3h-1zM293 851h1v1h-1zM294 851h1v1h-1zM295 851h1v1h-1zM296 851h1v1h-1zM297 851h1v1h-1zM298 851h1v1h-1zM299 851h1v1h-1zM300 851h1v1h-1zM301 851h1v1h-1zM302 851h1v1h-1zM303 851h1v1h-1zM304 851h1v1h-1zM305 851h1v1h-1zM306 851h1v1h-1zM307 851h1v1h-1zM308 851h1v1h-1zM309 851h1v1h-1zM310 851h1v1h-1zM311 851h1v1h-1zM312 851h1v1h-1zM313 851h1v1h-1zM314 848h1v4h-1zM315 849h1v3h-1zM316 851h1v1h-1zM317 851h1v1h-1zM318 851h1v1h-1zM319 851h1v1h-1zM320 851h1v1h-1zM321 851h1v1h-1zM322 851h1v1h-1zM323 851h1v1h-1zM324 851h1v1h-1zM325 851h1v1h-1zM326 851h1v1h-1zM327 851h1v1h-1zM328 851h1v1h-1zM329 851h1v1h-1zM330 851h1v1h-1zM331 851h1v1h-1zM332 851h1v1h-1zM333 851h1v1h-1zM334 851h1v1h-1zM335 851h1v1h-1zM336 851h1v1h-1zM337 851h1v1h-1zM338 851h1v1h-1zM339 851h1v1h-1zM340 851h1v1h-1zM341 851h1v1h-1zM342 851h1v1h-1zM343 851h1v1h-1zM344 851h1v1h-1zM345 851h1v1h-1zM346 851h1v1h-1zM347 851h1v1h-1zM348 851h1v1h-1zM349 848h1v4h-1zM350 849h1v3h-1zM351 851h1v1h-1zM352 851h1v1h-1zM353 851h1v1h-1zM354 851h1v1h-1zM355 851h1v1h-1zM356 851h1v1h-1zM357 851h1v1h-1zM358 851h1v1h-1zM359 851h1v1h-1zM360 851h1v1h-1zM361 851h1v1h-1zM362 851h1v1h-1zM363 851h1v1h-1zM364 851h1v1h-1zM365 851h1v1h-1zM366 851h1v1h-1zM367 851h1v1h-1zM368 851h1v1h-1zM369 851h1v1h-1zM370 851h1v1h-1zM371 851h1v1h-1zM372 851h1v1h-1zM373 851h1v1h-1zM374 851h1v1h-1zM375 851h1v1h-1zM376 851h1v1h-1zM377 851h1v1h-1zM378 851h1v1h-1zM379 851h1v1h-1zM380 848h1v4h-1zM381 849h1v3h-1zM382 851h1v1h-1zM383 851h1v1h-1zM384 851h1v1h-1zM385 851h1v1h-1zM386 851h1v1h-1zM387 851h1v1h-1zM388 851h1v1h-1zM389 851h1v1h-1zM390 851h1v1h-1zM391 851h1v1h-1zM392 851h1v1h-1zM393 851h1v1h-1zM394 851h1v1h-1zM395 851h1v1h-1zM396 851h1v1h-1zM397 851h1v1h-1zM398 851h1v1h-1zM399 851h1v1h-1zM400 851h1v1h-1zM401 851h1v1h-1zM402 851h1v1h-1zM403 851h1v1h-1zM404 851h1v1h-1zM405 851h1v1h-1zM406 851h1v1h-1zM407 851h1v1h-1zM408 851h1v1h-1zM409 851h1v1h-1zM410 851h1v1h-1zM411 851h1v1h-1zM412 851h1v1h-1zM413 851h1v1h-1zM414 851h1v1h-1zM415 851h1v1h-1zM416 851h1v1h-1zM417 851h1v1h-1zM418 851h1v1h-1zM419 851h1v1h-1zM420 851h1v1h-1zM421 851h1v1h-1zM422 851h1v1h-1zM423 851h1v1h-1zM424 851h1v1h-1zM425 851h1v1h-1zM426 851h1v1h-1zM427 851h1v1h-1zM428 851h1v1h-1zM429 851h1v1h-1zM430 851h1v1h-1zM431 851h1v1h-1zM432 851h1v1h-1zM433 851h1v1h-1zM434 851h1v1h-1zM435 851h1v1h-1zM436 851h1v1h-1zM437 851h1v1h-1zM438 851h1v1h-1zM439 851h1v1h-1zM440 848h1v4h-1zM441 849h1v3h-1zM442 851h1v1h-1zM443 848h1v4h-1zM444 849h1v3h-1zM445 851h1v1h-1zM446 851h1v1h-1zM447 851h1v1h-1zM448 851h1v1h-1zM449 848h1v4h-1zM450 849h1v3h-1zM451 851h1v1h-1zM452 851h1v1h-1zM453 851h1v1h-1zM454 851h1v1h-1zM455 851h1v1h-1zM456 851h1v1h-1zM457 851h1v1h-1zM458 851h1v1h-1zM459 851h1v1h-1zM460 851h1v1h-1zM461 851h1v1h-1zM462 851h1v1h-1zM463 851h1v1h-1zM464 851h1v1h-1zM465 851h1v1h-1zM466 851h1v1h-1zM467 851h1v1h-1zM468 851h1v1h-1zM469 851h1v1h-1zM470 851h1v1h-1zM471 851h1v1h-1zM472 851h1v1h-1zM473 851h1v1h-1zM474 851h1v1h-1zM475 851h1v1h-1zM476 851h1v1h-1zM477 851h1v1h-1zM478 851h1v1h-1zM479 851h1v1h-1zM480 851h1v1h-1zM481 851h1v1h-1zM482 851h1v1h-1zM483 851h1v1h-1zM484 851h1v1h-1zM485 851h1v1h-1zM486 851h1v1h-1zM487 851h1v1h-1zM488 851h1v1h-1zM489 851h1v1h-1zM490 851h1v1h-1zM491 851h1v1h-1zM492 851h1v1h-1zM493 851h1v1h-1zM494 851h1v1h-1zM495 848h1v4h-1zM496 849h1v3h-1zM497 851h1v1h-1zM498 851h1v1h-1zM499 851h1v1h-1zM500 851h1v1h-1zM501 851h1v1h-1zM502 851h1v1h-1zM503 851h1v1h-1zM504 851h1v1h-1zM505 851h1v1h-1zM506 851h1v1h-1zM507 851h1v1h-1zM508 851h1v1h-1zM509 851h1v1h-1zM510 851h1v1h-1zM511 851h1v1h-1zM512 851h1v1h-1zM513 851h1v1h-1zM514 851h1v1h-1zM515 851h1v1h-1zM516 851h1v1h-1zM517 851h1v1h-1zM518 851h1v1h-1zM519 851h1v1h-1zM520 848h1v4h-1zM521 849h1v3h-1zM522 851h1v1h-1zM523 851h1v1h-1zM524 851h1v1h-1zM525 851h1v1h-1zM526 851h1v1h-1zM527 851h1v1h-1zM528 851h1v1h-1zM529 851h1v1h-1zM530 851h1v1h-1zM531 851h1v1h-1zM532 851h1v1h-1zM533 851h1v1h-1zM534 851h1v1h-1zM535 851h1v1h-1zM536 851h1v1h-1zM537 851h1v1h-1zM538 851h1v1h-1zM539 851h1v1h-1zM540 851h1v1h-1zM541 851h1v1h-1zM542 851h1v1h-1zM543 851h1v1h-1zM544 851h1v1h-1zM545 851h1v1h-1zM546 851h1v1h-1zM547 851h1v1h-1zM548 851h1v1h-1zM549 851h1v1h-1zM550 851h1v1h-1zM551 848h1v4h-1zM552 849h1v3h-1zM553 851h1v1h-1zM554 851h1v1h-1zM555 851h1v1h-1zM556 851h1v1h-1zM557 851h1v1h-1zM558 851h1v1h-1zM559 851h1v1h-1zM560 851h1v1h-1zM561 851h1v1h-1zM562 851h1v1h-1zM563 851h1v1h-1zM564 851h1v1h-1zM565 851h1v1h-1zM566 851h1v1h-1zM567 851h1v1h-1zM568 851h1v1h-1zM569 851h1v1h-1zM570 851h1v1h-1zM571 851h1v1h-1zM572 851h1v1h-1zM573 851h1v1h-1zM574 851h1v1h-1zM575 851h1v1h-1zM576 851h1v1h-1zM577 851h1v1h-1zM578 851h1v1h-1zM579 851h1v1h-1zM580 851h1v1h-1zM581 851h1v1h-1zM582 851h1v1h-1zM583 851h1v1h-1zM584 851h1v1h-1zM585 851h1v1h-1zM586 851h1v1h-1zM587 851h1v1h-1zM588 851h1v1h-1zM589 851h1v1h-1zM590 851h1v1h-1zM591 851h1v1h-1zM592 851h1v1h-1zM593 851h1v1h-1zM594 851h1v1h-1zM595 851h1v1h-1zM596 851h1v1h-1zM597 851h1v1h-1zM598 851h1v1h-1zM599 851h1v1h-1zM600 851h1v1h-1zM601 851h1v1h-1zM602 851h1v1h-1zM603 851h1v1h-1zM604 851h1v1h-1zM605 851h1v1h-1zM606 848h1v4h-1zM607 849h1v3h-1zM608 851h1v1h-1zM609 851h1v1h-1zM610 851h1v1h-1zM611 851h1v1h-1zM612 851h1v1h-1zM613 851h1v1h-1zM614 851h1v1h-1zM615 851h1v1h-1zM616 851h1v1h-1zM617 851h1v1h-1zM618 851h1v1h-1zM619 851h1v1h-1zM620 851h1v1h-1zM621 851h1v1h-1zM622 851h1v1h-1zM623 851h1v1h-1zM624 851h1v1h-1zM625 851h1v1h-1zM626 851h1v1h-1zM627 851h1v1h-1zM628 851h1v1h-1zM629 851h1v1h-1zM630 851h1v1h-1zM631 851h1v1h-1zM632 851h1v1h-1zM633 851h1v1h-1zM634 851h1v1h-1zM635 851h1v1h-1zM636 851h1v1h-1zM637 851h1v1h-1zM638 851h1v1h-1zM639 851h1v1h-1zM640 851h1v1h-1zM641 851h1v1h-1zM642 851h1v1h-1zM643 851h1v1h-1zM644 851h1v1h-1zM645 851h1v1h-1zM646 851h1v1h-1zM647 851h1v1h-1zM648 851h1v1h-1zM649 851h1v1h-1zM650 851h1v1h-1zM651 851h1v20h-1zM652 870h1v87h-1zM653 929h1v28h-1zM654 940h1v17h-1zM655 953h1v4h-1zM656 956h1v1h-1zM657 953h1v4h-1zM658 956h1v1h-1zM659 953h1v4h-1zM660 953h1v4h-1zM661 953h1v4h-1zM662 956h1v1h-1zM663 953h1v4h-1zM664 953h1v4h-1zM665 953h1v4h-1zM666 953h1v4h-1zM667 953h1v4h-1zM668 953h1v4h-1zM669 953h1v4h-1zM670 953h1v4h-1zM671 953h1v4h-1zM672 956h1v1h-1zM673 956h1v1h-1zM674 956h1v1h-1zM675 956h1v1h-1zM676 953h1v3h-1zM677 954h1v3h-1zM678 956h1v1h-1zM679 953h1v4h-1zM680 953h1v4h-1zM681 953h1v4h-1zM682 953h1v4h-1zM683 953h1v4h-1zM684 953h1v4h-1zM685 953h1v4h-1zM686 953h1v4h-1zM687 953h1v4h-1zM688 953h1v1h-1zM689 953h1v1h-1zM690 953h1v4h-1zM691 953h1v4h-1zM692 953h1v4h-1zM693 953h1v4h-1zM694 953h1v4h-1zM695 953h1v4h-1zM696 953h1v4h-1zM697 953h1v4h-1zM698 956h1v1h-1zM699 953h1v4h-1zM700 954h1v3h-1zM701 953h1v4h-1zM702 953h1v4h-1zM703 953h1v3h-1zM704 953h1v4h-1zM705 953h1v4h-1zM706 953h1v4h-1zM707 953h1v4h-1zM708 956h1v1h-1zM709 953h1v4h-1zM710 956h1v1h-1zM711 953h1v4h-1zM712 953h1v1h-1zM713 953h1v4h-1zM714 953h1v4h-1zM715 953h1v4h-1zM716 953h1v4h-1zM717 954h1v3h-1zM718 956h1v1h-1zM719 953h1v4h-1zM720 953h1v4h-1zM721 953h1v4h-1zM722 953h1v4h-1zM723 953h1v4h-1zM724 953h1v4h-1zM725 953h1v1h-1zM726 953h1v4h-1zM727 953h1v4h-1zM728 953h1v4h-1zM729 953h1v4h-1zM730 953h1v4h-1zM731 956h1v1h-1zM732 953h1v4h-1zM733 956h1v1h-1zM734 953h1v4h-1zM735 953h1v4h-1zM736 953h1v4h-1zM737 954h1v3h-1zM738 953h1v3h-1zM739 953h1v4h-1zM740 956h1v1h-1zM741 953h1v4h-1zM742 953h1v4h-1zM743 953h1v4h-1zM744 954h1v3h-1zM745 953h1v4h-1zM746 953h1v4h-1zM747 953h1v4h-1zM748 953h1v4h-1zM749 953h1v4h-1zM750 953h1v4h-1zM751 956h1v1h-1zM752 953h1v4h-1zM753 953h1v4h-1zM754 956h1v1h-1zM755 956h1v1h-1zM756 956h1v1h-1zM757 953h1v4h-1zM758 953h1v3h-1zM759 953h1v4h-1zM760 953h1v4h-1zM761 954h1v3h-1zM762 953h1v4h-1zM763 953h1v4h-1zM764 953h1v3h-1zM765 954h1v3h-1zM766 953h1v4h-1zM767 954h1v3h-1zM768 953h1v3h-1zM769 953h1v4h-1zM770 953h1v4h-1zM771 953h1v4h-1zM772 953h1v4h-1zM773 953h1v4h-1zM774 953h1v4h-1zM775 953h1v4h-1zM776 953h1v4h-1zM777 954h1v3h-1zM778 953h1v4h-1zM779 956h1v1h-1zM780 956h1v1h-1zM781 953h1v4h-1zM782 953h1v4h-1zM783 953h1v4h-1zM784 956h1v1h-1zM785 953h1v4h-1zM786 953h1v4h-1zM787 953h1v4h-1zM788 953h1v4h-1zM789 953h1v4h-1zM790 953h1v4h-1zM791 953h1v4h-1zM792 954h1v3h-1zM793 953h1v4h-1zM794 953h1v4h-1zM795 956h1v1h-1zM796 953h1v4h-1zM797 953h1v4h-1zM798 953h1v4h-1zM799 953h1v4h-1zM800 953h1v4h-1zM801 956h1v1h-1zM802 953h1v4h-1zM803 953h1v4h-1zM804 953h1v4h-1zM805 953h1v4h-1zM806 956h1v1h-1zM807 953h1v4h-1zM808 956h1v1h-1zM809 953h1v4h-1zM810 953h1v4h-1zM811 953h1v4h-1zM812 953h1v4h-1zM813 953h1v4h-1zM814 956h1v1h-1zM815 953h1v4h-1zM816 954h1v3h-1zM817 953h1v4h-1zM818 956h1v1h-1zM819 953h1v4h-1zM820 953h1v4h-1zM821 953h1v4h-1zM822 953h1v4h-1zM823 953h1v4h-1zM824 953h1v4h-1zM825 956h1v1h-1zM826 953h1v4h-1zM827 956h1v1h-1zM828 953h1v4h-1zM829 953h1v4h-1zM830 956h1v1h-1zM831 953h1v4h-1zM832 953h1v4h-1zM833 953h1v4h-1zM834 953h1v4h-1zM835 953h1v4h-1zM836 953h1v4h-1zM837 953h1v4h-1zM838 953h1v4h-1zM839 956h1v1h-1zM840 953h1v4h-1zM841 953h1v4h-1zM842 956h1v1h-1zM843 953h1v4h-1zM844 953h1v4h-1zM845 953h1v4h-1zM846 953h1v4h-1zM847 954h1v3h-1zM848 953h1v4h-1zM849 953h1v4h-1zM850 953h1v4h-1zM851 953h1v4h-1zM852 953h1v4h-1zM853 953h1v4h-1zM854 954h1v3h-1zM855 953h1v4h-1zM856 956h1v1h-1zM857 953h1v4h-1zM858 953h1v3h-1zM859 954h1v3h-1zM860 956h1v1h-1zM861 956h1v1h-1zM862 953h1v4h-1zM863 953h1v4h-1zM864 953h1v4h-1zM865 953h1v4h-1zM866 953h1v4h-1zM867 956h1v1h-1zM868 956h1v1h-1zM869 953h1v4h-1zM870 953h1v4h-1zM871 954h1v3h-1zM872 953h1v4h-1zM873 953h1v4h-1zM874 953h1v4h-1zM875 953h1v4h-1zM876 953h1v4h-1zM877 953h1v4h-1zM878 953h1v4h-1zM879 953h1v4h-1zM880 953h1v4h-1zM881 954h1v3h-1zM882 953h1v4h-1zM883 953h1v4h-1zM884 956h1v1h-1zM885 953h1v4h-1zM886 953h1v3h-1zM887 953h1v4h-1zM888 953h1v4h-1zM889 953h1v4h-1zM890 953h1v4h-1zM891 953h1v4h-1zM892 953h1v4h-1zM893 956h1v1h-1zM894 953h1v4h-1zM895 956h1v1h-1zM896 953h1v4h-1zM897 956h1v1h-1zM898 953h1v4h-1zM899 953h1v4h-1zM900 953h1v4h-1zM901 953h1v4h-1zM902 953h1v4h-1zM903 953h1v4h-1zM904 953h1v4h-1zM905 954h1v3h-1zM906 953h1v4h-1zM907 953h1v4h-1zM908 953h1v4h-1zM909 953h1v4h-1zM910 956h1v1h-1zM911 953h1v4h-1zM912 953h1v4h-1zM913 953h1v4h-1zM914 956h1v1h-1zM915 953h1v4h-1zM916 953h1v4h-1zM917 953h1v4h-1zM918 956h1v1h-1zM919 953h1v4h-1zM920 954h1v3h-1zM921 953h1v4h-1zM922 953h1v4h-1zM923 953h1v4h-1zM924 954h1v3h-1zM925 953h1v4h-1zM926 953h1v4h-1zM927 954h1v3h-1zM928 953h1v4h-1zM929 953h1v4h-1zM930 954h1v3h-1zM931 953h1v4h-1zM932 954h1v3h-1zM933 953h1v4h-1zM934 954h1v3h-1zM935 953h1v4h-1zM936 953h1v4h-1zM937 953h1v4h-1zM938 953h1v4h-1zM939 953h1v4h-1zM940 954h1v3h-1zM941 953h1v4h-1zM942 956h1v1h-1zM943 953h1v3h-1zM944 954h1v3h-1zM945 953h1v4h-1zM946 953h1v4h-1zM947 956h1v1h-1zM948 953h1v3h-1zM949 953h1v4h-1zM950 953h1v4h-1zM951 953h1v4h-1zM952 953h1v4h-1zM953 953h1v4h-1zM954 953h1v4h-1zM955 954h1v3h-1zM956 956h1v1h-1zM957 953h1v4h-1zM958 954h1v3h-1zM959 956h1v1h-1zM960 953h1v4h-1zM961 953h1v4h-1zM962 954h1v3h-1zM963 953h1v4h-1zM964 953h1v4h-1zM965 954h1v3h-1zM966 953h1v4h-1zM967 953h1v1h-1zM968 953h1v4h-1zM969 956h1v1h-1zM970 953h1v4h-1zM971 953h1v4h-1zM972 953h1v4h-1zM973 953h1v4h-1zM974 953h1v3h-1zM975 953h1v4h-1zM976 956h1v1h-1zM977 953h1v4h-1zM978 953h1v4h-1zM979 953h1v4h-1zM980 953h1v4h-1zM981 953h1v4h-1zM982 953h1v4h-1zM983 953h1v3h-1zM984 953h1v4h-1zM985 953h1v4h-1zM986 953h1v3h-1zM987 953h1v4h-1zM988 953h1v4h-1zM989 954h1v3h-1zM990 956h1v1h-1zM991 953h1v4h-1zM992 953h1v4h-1zM993 953h1v4h-1zM994 953h1v4h-1zM995 953h1v4h-1zM996 953h1v4h-1zM997 953h1v4h-1zM998 953h1v1h-1zM999 953h1v4h-1zM1000 953h1v4h-1zM1001 956h1v1h-1zM1002 956h1v1h-1zM1003 956h1v1h-1zM1004 953h1v4h-1zM1005 953h1v4h-1zM1006 953h1v4h-1zM1007 953h1v1h-1zM1008 953h1v4h-1zM1009 953h1v4h-1zM1010 953h1v3h-1zM1011 953h1v4h-1zM1012 953h1v4h-1zM1013 953h1v4h-1zM1014 954h1v3h-1zM1015 956h1v1h-1zM1016 953h1v4h-1zM1017 953h1v4h-1zM1018 953h1v4h-1zM1019 953h1v4h-1zM1020 953h1v4h-1zM1021 954h1v3h-1zM1022 953h1v4h-1zM1023 953h1v4h-1zM1024 953h1v4h-1zM1025 953h1v4h-1zM1026 953h1v4h-1zM1027 953h1v4h-1zM1028 953h1v4h-1zM1029 954h1v3h-1zM1030 953h1v4h-1zM1031 953h1v1h-1zM1032 953h1v4h-1zM1033 953h1v4h-1zM1034 953h1v4h-1zM1035 954h1v3h-1zM1036 953h1v4h-1zM1037 953h1v4h-1zM1038 956h1v1h-1zM1039 953h1v3h-1zM1040 954h1v3h-1zM1041 953h1v4h-1zM1042 956h1v1h-1zM1043 953h1v4h-1zM1044 953h1v4h-1zM1045 953h1v4h-1zM1046 953h1v4h-1zM1047 953h1v4h-1zM1048 954h1v3h-1zM1049 953h1v4h-1zM1050 953h1v4h-1zM1051 954h1v3h-1zM1052 953h1v4h-1zM1053 953h1v4h-1zM1054 956h1v1h-1zM1055 949h1v7h-1zM1056 948h1v6h-1zM1057 949h1v8h-1zM1058 956h1v1h-1zM1059 953h1v4h-1zM1060 953h1v4h-1zM1061 953h1v4h-1zM1062 953h1v4h-1zM1063 953h1v4h-1zM1064 953h1v4h-1zM1065 953h1v3h-1zM1066 953h1v4h-1z" fill="#ffff00"/>
  <path d="M26 418h1v4h-1zM27 418h1v1h-1zM28 418h1v1h-1zM29 418h1v1h-1zM30 418h1v1h-1zM31 418h1v1h-1zM32 418h1v4h-1zM33 418h1v4h-1zM34 418h1v3h-1zM35 418h1v1h-1zM36 418h1v4h-1zM37 418h1v1h-1zM38 418h1v4h-1zM39 418h1v3h-1zM40 418h1v1h-1zM41 418h1v4h-1zM42 415h1v7h-1zM43 416h1v3h-1zM44 418h1v1h-1zM45 418h1v4h-1zM46 418h1v3h-1zM47 418h1v4h-1zM48 418h1v1h-1zM49 418h1v4h-1zM50 418h1v4h-1zM51 418h1v3h-1zM52 418h1v1h-1zM53 418h1v1h-1zM54 418h1v1h-1zM55 418h1v4h-1zM56 418h1v1h-1zM57 418h1v1h-1zM58 418h1v4h-1zM59 418h1v1h-1zM60 418h1v1h-1zM61 418h1v4h-1zM62 418h1v4h-1zM63 418h1v1h-1zM64 418h1v1h-1zM65 418h1v4h-1zM66 418h1v3h-1zM67 418h1v1h-1zM68 418h1v1h-1zM69 418h1v1h-1zM70 418h1v1h-1zM71 418h1v1h-1zM72 418h1v1h-1zM73 418h1v1h-1zM74 418h1v1h-1zM75 418h1v1h-1zM76 418h1v1h-1zM77 418h1v4h-1zM78 418h1v4h-1zM79 418h1v3h-1zM80 418h1v4h-1zM81 418h1v4h-1zM82 418h1v1h-1zM83 418h1v1h-1zM84 418h1v1h-1zM85 418h1v1h-1zM86 418h1v1h-1zM87 418h1v4h-1zM88 418h1v1h-1zM89 418h1v4h-1zM90 418h1v4h-1zM91 418h1v4h-1zM92 418h1v1h-1zM93 418h1v1h-1zM94 418h1v1h-1zM95 418h1v1h-1zM96 415h1v4h-1zM97 416h1v3h-1zM98 418h1v1h-1zM99 418h1v4h-1zM100 418h1v3h-1zM101 418h1v1h-1zM102 418h1v1h-1zM103 418h1v1h-1zM104 418h1v4h-1zM105 418h1v3h-1zM106 418h1v4h-1zM107 418h1v3h-1zM108 418h1v4h-1zM109 418h1v1h-1zM110 418h1v1h-1zM111 418h1v1h-1zM112 418h1v4h-1zM113 418h1v3h-1zM114 418h1v4h-1zM115 418h1v1h-1zM116 418h1v4h-1zM117 418h1v1h-1zM118 418h1v1h-1zM119 418h1v1h-1zM120 418h1v1h-1zM121 418h1v1h-1zM122 418h1v1h-1zM123 418h1v4h-1zM124 418h1v4h-1zM125 418h1v4h-1zM126 418h1v1h-1zM127 418h1v1h-1zM128 418h1v4h-1zM129 349h1v70h-1zM130 280h1v69h-1zM131 247h1v33h-1zM132 224h1v23h-1zM133 215h1v9h-1zM134 211h1v5h-1zM135 211h1v5h-1zM136 211h1v1h-1zM137 208h1v4h-1zM138 208h1v4h-1zM139 208h1v4h-1zM140 208h1v1h-1zM141 208h1v1h-1zM142 208h1v4h-1zM143 205h1v6h-1zM144 205h1v4h-1zM145 205h1v4h-1zM146 205h1v4h-1zM147 205h1v4h-1zM148 205h1v4h-1zM149 205h1v4h-1zM150 205h1v4h-1zM151 205h1v4h-1zM152 205h1v4h-1zM153 205h1v3h-1zM154 201h1v5h-1zM155 205h1v1h-1zM156 205h1v1h-1zM157 205h1v1h-1zM158 205h1v4h-1zM159 205h1v3h-1zM160 205h1v1h-1zM161 205h1v1h-1zM162 205h1v1h-1zM163 201h1v5h-1zM164 202h1v4h-1zM165 201h1v5h-1zM166 201h1v5h-1zM167 201h1v5h-1zM168 201h1v5h-1zM169 201h1v5h-1zM170 205h1v1h-1zM171 201h1v5h-1zM172 205h1v1h-1zM173 201h1v5h-1zM174 202h1v4h-1zM175 201h1v5h-1zM176 201h1v5h-1zM177 201h1v5h-1zM178 201h1v5h-1zM179 205h1v1h-1zM180 201h1v5h-1zM181 201h1v5h-1zM182 202h1v4h-1zM183 201h1v5h-1zM184 201h1v5h-1zM185 201h1v5h-1zM186 202h1v4h-1zM187 201h1v5h-1zM188 201h1v5h-1zM189 201h1v5h-1zM190 201h1v5h-1zM191 202h1v4h-1zM192 201h1v5h-1zM193 201h1v5h-1zM194 201h1v5h-1zM195 202h1v4h-1zM196 201h1v4h-1zM197 201h1v5h-1zM198 201h1v1h-1zM199 201h1v5h-1zM200 201h1v5h-1zM201 201h1v5h-1zM202 202h1v4h-1zM203 201h1v5h-1zM204 201h1v5h-1zM205 201h1v5h-1zM206 201h1v5h-1zM207 201h1v5h-1zM208 205h1v1h-1zM209 201h1v5h-1zM210 201h1v5h-1zM211 201h1v5h-1zM212 201h1v5h-1zM213 201h1v5h-1zM214 202h1v4h-1zM215 205h1v1h-1zM216 201h1v5h-1zM217 201h1v5h-1zM218 202h1v4h-1zM219 201h1v5h-1zM220 202h1v4h-1zM221 201h1v5h-1zM222 205h1v1h-1zM223 201h1v5h-1zM224 201h1v5h-1zM225 205h1v1h-1zM226 201h1v5h-1zM227 201h1v5h-1zM228 202h1v4h-1zM229 205h1v1h-1zM230 201h1v5h-1zM231 201h1v5h-1zM232 205h1v1h-1zM233 201h1v5h-1zM234 201h1v5h-1zM235 201h1v5h-1zM236 205h1v1h-1zM237 201h1v5h-1zM238 201h1v5h-1zM239 205h1v1h-1zM240 201h1v4h-1zM241 202h1v4h-1zM242 205h1v1h-1zM243 201h1v5h-1zM244 205h1v1h-1zM245 201h1v5h-1zM246 201h1v5h-1zM247 201h1v5h-1zM248 201h1v5h-1zM249 201h1v5h-1zM250 205h1v1h-1zM251 201h1v5h-1zM252 201h1v5h-1zM253 201h1v5h-1zM254 201h1v5h-1zM255 201h1v5h-1zM256 201h1v5h-1zM257 201h1v5h-1zM258 201h1v5h-1zM259 201h1v5h-1zM260 201h1v5h-1zM261 205h1v1h-1zM262 205h1v1h-1zM263 201h1v5h-1zM264 205h1v1h-1zM265 201h1v5h-1zM266 201h1v5h-1zM267 201h1v5h-1zM268 202h1v4h-1zM269 201h1v5h-1zM270 202h1v4h-1zM271 205h1v1h-1zM272 205h1v1h-1zM273 201h1v5h-1zM274 201h1v5h-1zM275 205h1v4h-1zM276 205h1v4h-1zM277 205h1v1h-1zM278 205h1v1h-1zM279 205h1v4h-1zM280 205h1v1h-1zM281 205h1v4h-1zM282 205h1v1h-1zM283 205h1v1h-1zM284 205h1v1h-1zM285 205h1v1h-1zM286 205h1v4h-1zM287 205h1v3h-1zM288 205h1v1h-1zM289 205h1v4h-1zM290 205h1v3h-1zM291 205h1v4h-1zM292 205h1v4h-1zM293 205h1v4h-1zM294 205h1v4h-1zM295 205h1v4h-1zM296 205h1v3h-1zM297 205h1v4h-1zM298 206h1v3h-1zM299 205h1v4h-1zM300 205h1v4h-1zM301 208h1v1h-1zM302 205h1v4h-1zM303 208h1v1h-1zM304 208h1v1h-1zM305 208h1v1h-1zM306 208h1v1h-1zM307 208h1v1h-1zM308 205h1v7h-1zM309 208h1v4h-1zM310 208h1v1h-1zM311 208h1v1h-1zM312 208h1v4h-1zM313 208h1v3h-1zM314 208h1v1h-1zM315 208h1v1h-1zM316 208h1v1h-1zM317 208h1v1h-1zM318 208h1v4h-1zM319 208h1v4h-1zM320 211h1v1h-1zM321 208h1v4h-1zM322 208h1v4h-1zM323 208h1v4h-1zM324 211h1v1h-1zM325 208h1v8h-1zM326 211h1v4h-1zM327 211h1v1h-1zM328 211h1v1h-1zM329 211h1v5h-1zM330 211h1v1h-1zM331 211h1v1h-1zM332 211h1v5h-1zM333 211h1v5h-1zM334 211h1v1h-1zM335 212h1v4h-1zM336 215h1v1h-1zM337 215h1v1h-1zM338 215h1v1h-1zM339 215h1v1h-1zM340 215h1v1h-1zM341 215h1v1h-1zM342 215h1v4h-1zM343 215h1v4h-1zM344 215h1v4h-1zM345 215h1v4h-1zM346 216h1v3h-1zM347 218h1v1h-1zM348 215h1v4h-1zM349 218h1v1h-1zM350 218h1v1h-1zM351 218h1v1h-1zM352 218h1v4h-1zM353 218h1v3h-1zM354 219h1v3h-1zM355 218h1v4h-1zM356 219h1v3h-1zM357 221h1v1h-1zM358 221h1v1h-1zM359 221h1v1h-1zM360 221h1v4h-1zM361 221h1v4h-1zM362 221h1v4h-1zM363 224h1v1h-1zM364 224h1v5h-1zM365 224h1v5h-1zM366 224h1v5h-1zM367 224h1v5h-1zM368 228h1v1h-1zM369 228h1v4h-1zM370 228h1v4h-1zM371 228h1v4h-1zM372 229h1v3h-1zM373 231h1v1h-1zM374 231h1v1h-1zM375 231h1v1h-1zM376 231h1v4h-1zM377 234h1v1h-1zM378 234h1v1h-1zM379 234h1v4h-1zM380 237h1v1h-1zM381 237h1v5h-1zM382 237h1v5h-1zM383 241h1v1h-1zM384 237h1v5h-1zM385 238h1v4h-1zM386 241h1v1h-1zM387 241h1v4h-1zM388 244h1v1h-1zM389 245h1v3h-1zM390 247h1v1h-1zM391 247h1v1h-1zM392 248h1v4h-1zM393 247h1v4h-1zM394 248h1v4h-1zM395 251h1v1h-1zM396 251h1v4h-1zM397 251h1v4h-1zM398 252h1v3h-1zM399 254h1v1h-1zM400 254h1v1h-1zM401 254h1v4h-1zM402 257h1v1h-1zM403 257h1v4h-1zM404 257h1v4h-1zM405 260h1v1h-1zM406 260h1v5h-1zM407 260h1v5h-1zM408 264h1v1h-1zM409 264h1v1h-1zM410 265h1v3h-1zM411 264h1v4h-1zM412 267h1v4h-1zM413 270h1v1h-1zM414 270h1v1h-1zM415 270h1v1h-1zM416 267h1v7h-1zM417 270h1v4h-1zM418 270h1v4h-1zM419 273h1v1h-1zM420 273h1v5h-1zM421 274h1v4h-1zM422 277h1v4h-1zM423 280h1v4h-1zM424 283h1v1h-1zM425 284h1v7h-1zM426 290h1v1h-1zM427 291h1v6h-1zM428 296h1v5h-1zM429 300h1v4h-1zM430 303h1v4h-1zM431 306h1v4h-1zM432 307h1v7h-1zM433 314h1v3h-1zM434 317h1v3h-1zM435 320h1v7h-1zM436 326h1v4h-1zM437 329h1v4h-1zM438 332h1v5h-1zM439 337h1v3h-1zM440 340h1v3h-1zM441 343h1v7h-1zM442 349h1v4h-1zM443 352h1v4h-1zM444 355h1v5h-1zM445 359h1v4h-1zM446 362h1v4h-1zM447 365h1v4h-1zM448 368h1v1h-1zM449 368h1v5h-1zM450 372h1v4h-1zM451 375h1v1h-1zM452 376h1v3h-1zM453 378h1v1h-1zM454 378h1v1h-1zM455 378h1v5h-1zM456 379h1v4h-1zM457 383h1v3h-1zM458 385h1v4h-1zM459 386h1v6h-1zM460 389h1v3h-1zM461 391h1v1h-1zM462 392h1v4h-1zM463 395h1v4h-1zM464 395h1v3h-1zM465 395h1v4h-1zM466 398h1v1h-1zM467 398h1v1h-1zM468 398h1v4h-1zM469 398h1v4h-1zM470 401h1v1h-1zM471 401h1v1h-1zM472 401h1v4h-1zM473 404h1v1h-1zM474 404h1v1h-1zM475 401h1v4h-1zM476 404h1v1h-1zM477 404h1v5h-1zM478 404h1v4h-1zM479 404h1v5h-1zM480 404h1v5h-1zM481 405h1v4h-1zM482 408h1v1h-1zM483 408h1v4h-1zM484 408h1v4h-1zM485 408h1v3h-1zM486 408h1v1h-1zM487 408h1v1h-1zM488 409h1v3h-1zM489 411h1v1h-1zM490 411h1v4h-1zM491 411h1v1h-1zM492 411h1v1h-1zM493 411h1v4h-1zM494 411h1v4h-1zM495 414h1v1h-1zM496 414h1v5h-1zM497 414h1v1h-1zM498 414h1v1h-1zM499 414h1v1h-1zM500 414h1v5h-1zM501 414h1v5h-1zM502 415h1v4h-1zM503 414h1v5h-1zM504 414h1v1h-1zM505 414h1v1h-1zM506 411h1v8h-1zM507 414h1v5h-1zM508 418h1v1h-1zM509 414h1v5h-1zM510 414h1v1h-1zM511 414h1v1h-1zM512 415h1v4h-1zM513 418h1v1h-1zM514 418h1v4h-1zM515 418h1v1h-1zM516 414h1v5h-1zM517 414h1v1h-1zM518 414h1v5h-1zM519 418h1v1h-1zM520 418h1v1h-1zM521 418h1v1h-1zM522 414h1v5h-1zM523 414h1v5h-1zM524 414h1v5h-1zM525 418h1v4h-1zM526 418h1v1h-1zM527 414h1v5h-1zM528 414h1v5h-1zM529 414h1v4h-1zM530 414h1v1h-1zM531 415h1v4h-1zM532 418h1v1h-1zM533 414h1v5h-1zM534 414h1v5h-1zM535 414h1v5h-1zM536 414h1v5h-1zM537 418h1v1h-1zM538 418h1v1h-1zM539 418h1v1h-1zM540 418h1v1h-1zM541 414h1v4h-1zM542 415h1v4h-1zM543 418h1v1h-1zM544 414h1v8h-1zM545 414h1v5h-1zM546 414h1v5h-1zM547 414h1v5h-1zM548 415h1v4h-1zM549 414h1v8h-1zM550 418h1v4h-1zM551 418h1v3h-1zM552 414h1v5h-1zM553 414h1v5h-1zM554 418h1v4h-1zM555 418h1v1h-1zM556 418h1v4h-1zM557 418h1v4h-1zM558 414h1v5h-1zM559 418h1v1h-1zM560 418h1v1h-1zM561 418h1v4h-1zM562 418h1v4h-1zM563 418h1v4h-1zM564 414h1v7h-1zM565 418h1v1h-1zM566 414h1v5h-1zM567 415h1v4h-1zM568 418h1v4h-1zM569 418h1v4h-1zM570 414h1v5h-1zM571 414h1v5h-1zM572 415h1v4h-1zM573 418h1v1h-1zM574 418h1v4h-1zM575 418h1v4h-1zM576 418h1v4h-1zM577 418h1v1h-1zM578 414h1v5h-1zM579 418h1v1h-1zM580 418h1v1h-1zM581 418h1v4h-1zM582 418h1v3h-1zM583 418h1v1h-1zM584 414h1v5h-1zM585 418h1v1h-1zM586 418h1v4h-1zM587 419h1v3h-1zM588 418h1v4h-1zM589 418h1v1h-1zM590 418h1v1h-1zM591 418h1v1h-1zM592 418h1v4h-1zM593 418h1v4h-1zM594 418h1v4h-1zM595 418h1v1h-1zM596 418h1v1h-1zM597 418h1v1h-1zM598 418h1v4h-1zM599 418h1v4h-1zM600 418h1v4h-1zM601 418h1v3h-1zM602 418h1v1h-1zM603 418h1v1h-1zM604 418h1v4h-1zM605 419h1v3h-1zM606 421h1v1h-1zM607 418h1v3h-1zM608 418h1v1h-1zM609 414h1v8h-1zM610 418h1v4h-1zM611 421h1v1h-1zM612 418h1v4h-1zM613 418h1v4h-1zM614 418h1v1h-1zM615 418h1v1h-1zM616 418h1v4h-1zM617 421h1v1h-1zM618 418h1v4h-1zM619 418h1v4h-1zM620 418h1v1h-1zM621 418h1v4h-1zM622 418h1v4h-1zM623 421h1v1h-1zM624 421h1v1h-1zM625 418h1v3h-1zM626 418h1v4h-1zM627 418h1v1h-1zM628 418h1v4h-1zM629 421h1v1h-1zM630 421h1v4h-1zM631 418h1v4h-1zM632 418h1v3h-1zM633 418h1v4h-1zM634 418h1v4h-1zM635 419h1v3h-1zM636 421h1v1h-1zM637 418h1v4h-1zM638 418h1v4h-1zM639 418h1v1h-1zM640 419h1v3h-1zM641 421h1v1h-1zM642 421h1v4h-1zM643 418h1v4h-1zM644 418h1v1h-1zM645 418h1v4h-1zM646 418h1v4h-1zM647 421h1v1h-1zM648 421h1v4h-1zM649 421h1v4h-1zM650 414h1v8h-1zM651 405h1v21h-1zM652 388h1v483h-1zM653 952h1v7h-1zM654 938h1v14h-1zM655 912h1v26h-1zM656 899h1v13h-1zM657 883h1v16h-1zM658 863h1v20h-1zM659 847h1v16h-1zM660 830h1v17h-1zM661 808h1v22h-1zM662 798h1v10h-1zM663 785h1v13h-1zM664 775h1v10h-1zM665 762h1v13h-1zM666 752h1v10h-1zM667 739h1v13h-1zM668 732h1v8h-1zM669 722h1v10h-1zM670 713h1v9h-1zM671 700h1v13h-1zM672 693h1v7h-1zM673 686h1v7h-1zM674 680h1v10h-1zM675 673h1v7h-1zM676 667h1v6h-1zM677 660h1v7h-1zM678 654h1v6h-1zM679 647h1v7h-1zM680 644h1v4h-1zM681 641h1v3h-1zM682 631h1v10h-1zM683 631h1v1h-1zM684 624h1v7h-1zM685 618h1v7h-1zM686 614h1v4h-1zM687 608h1v6h-1zM688 608h1v1h-1zM689 601h1v7h-1zM690 595h1v6h-1zM691 591h1v5h-1zM692 588h1v4h-1zM693 585h1v4h-1zM694 582h1v4h-1zM695 582h1v1h-1zM696 575h1v7h-1zM697 572h1v4h-1zM698 569h1v4h-1zM699 565h1v5h-1zM700 565h1v1h-1zM701 559h1v6h-1zM702 559h1v4h-1zM703 555h1v5h-1zM704 555h1v1h-1zM705 552h1v3h-1zM706 549h1v4h-1zM707 546h1v4h-1zM708 542h1v5h-1zM709 542h1v4h-1zM710 539h1v4h-1zM711 536h1v4h-1zM712 536h1v4h-1zM713 533h1v4h-1zM714 533h1v4h-1zM715 533h1v4h-1zM716 533h1v1h-1zM717 529h1v4h-1zM718 529h1v1h-1zM719 526h1v3h-1zM720 523h1v4h-1zM721 523h1v4h-1zM722 523h1v3h-1zM723 523h1v1h-1zM724 519h1v4h-1zM725 519h1v1h-1zM726 519h1v1h-1zM727 519h1v1h-1zM728 519h1v1h-1zM729 516h1v4h-1zM730 516h1v4h-1zM731 513h1v4h-1zM732 513h1v4h-1zM733 513h1v1h-1zM734 513h1v1h-1zM735 510h1v4h-1zM736 510h1v4h-1zM737 510h1v4h-1zM738 510h1v1h-1zM739 510h1v1h-1zM740 506h1v5h-1zM741 506h1v5h-1zM742 506h1v5h-1zM743 506h1v4h-1zM744 503h1v4h-1zM745 503h1v4h-1zM746 503h1v4h-1zM747 503h1v4h-1zM748 503h1v1h-1zM749 500h1v4h-1zM750 503h1v1h-1zM751 500h1v3h-1zM752 500h1v4h-1zM753 500h1v4h-1zM754 500h1v1h-1zM755 500h1v1h-1zM756 497h1v3h-1zM757 497h1v4h-1zM758 497h1v3h-1zM759 497h1v4h-1zM760 493h1v5h-1zM761 493h1v5h-1zM762 493h1v5h-1zM763 494h1v4h-1zM764 497h1v1h-1zM765 493h1v5h-1zM766 493h1v5h-1zM767 493h1v1h-1zM768 493h1v1h-1zM769 493h1v5h-1zM770 493h1v1h-1zM771 493h1v1h-1zM772 490h1v4h-1zM773 493h1v1h-1zM774 490h1v4h-1zM775 490h1v4h-1zM776 490h1v4h-1zM777 490h1v4h-1zM778 490h1v3h-1zM779 490h1v1h-1zM780 490h1v1h-1zM781 487h1v4h-1zM782 487h1v4h-1zM783 487h1v4h-1zM784 487h1v4h-1zM785 487h1v4h-1zM786 487h1v4h-1zM787 487h1v4h-1zM788 487h1v1h-1zM789 487h1v1h-1zM790 487h1v1h-1zM791 483h1v5h-1zM792 487h1v1h-1zM793 487h1v1h-1zM794 483h1v5h-1zM795 483h1v5h-1zM796 483h1v4h-1zM797 483h1v1h-1zM798 483h1v5h-1zM799 483h1v5h-1zM800 483h1v5h-1zM801 483h1v4h-1zM802 483h1v1h-1zM803 483h1v1h-1zM804 483h1v1h-1zM805 483h1v1h-1zM806 483h1v1h-1zM807 483h1v1h-1zM808 483h1v1h-1zM809 480h1v4h-1zM810 480h1v4h-1zM811 481h1v3h-1zM812 483h1v1h-1zM813 480h1v4h-1zM814 480h1v4h-1zM815 480h1v4h-1zM816 480h1v4h-1zM817 480h1v1h-1zM818 480h1v4h-1zM819 480h1v3h-1zM820 480h1v1h-1zM821 480h1v1h-1zM822 480h1v1h-1zM823 480h1v1h-1zM824 480h1v1h-1zM825 480h1v1h-1zM826 480h1v1h-1zM827 477h1v4h-1zM828 478h1v3h-1zM829 477h1v4h-1zM830 477h1v4h-1zM831 480h1v1h-1zM832 480h1v1h-1zM833 477h1v4h-1zM834 478h1v3h-1zM835 477h1v4h-1zM836 477h1v4h-1zM837 477h1v3h-1zM838 477h1v4h-1zM839 477h1v4h-1zM840 477h1v4h-1zM841 477h1v1h-1zM842 477h1v1h-1zM843 477h1v1h-1zM844 477h1v1h-1zM845 477h1v1h-1zM846 474h1v4h-1zM847 477h1v1h-1zM848 477h1v1h-1zM849 477h1v1h-1zM850 474h1v4h-1zM851 474h1v4h-1zM852 474h1v4h-1zM853 474h1v4h-1zM854 474h1v3h-1zM855 474h1v4h-1zM856 474h1v4h-1zM857 474h1v4h-1zM858 474h1v3h-1zM859 474h1v4h-1zM860 474h1v4h-1zM861 474h1v1h-1zM862 474h1v1h-1zM863 474h1v1h-1zM864 474h1v1h-1zM865 474h1v1h-1zM866 474h1v1h-1zM867 474h1v1h-1zM868 474h1v1h-1zM869 470h1v5h-1zM870 470h1v4h-1zM871 471h1v4h-1zM872 474h1v1h-1zM873 474h1v1h-1zM874 474h1v1h-1zM875 474h1v1h-1zM876 474h1v1h-1zM877 474h1v1h-1zM878 470h1v5h-1zM879 470h1v5h-1zM880 470h1v5h-1zM881 470h1v1h-1zM882 471h1v4h-1zM883 470h1v4h-1zM884 470h1v1h-1zM885 470h1v1h-1zM886 470h1v1h-1zM887 470h1v1h-1zM888 470h1v1h-1zM889 470h1v1h-1zM890 470h1v5h-1zM891 467h1v4h-1zM892 468h1v3h-1zM893 470h1v1h-1zM894 470h1v1h-1zM895 467h1v4h-1zM896 467h1v4h-1zM897 468h1v3h-1zM898 467h1v4h-1zM899 467h1v4h-1zM900 467h1v3h-1zM901 467h1v1h-1zM902 467h1v4h-1zM903 467h1v4h-1zM904 467h1v4h-1zM905 467h1v4h-1zM906 467h1v4h-1zM907 467h1v3h-1zM908 467h1v4h-1zM909 467h1v3h-1zM910 467h1v1h-1zM911 467h1v4h-1zM912 467h1v3h-1zM913 467h1v1h-1zM914 467h1v1h-1zM915 467h1v1h-1zM916 467h1v1h-1zM917 464h1v4h-1zM918 467h1v4h-1zM919 467h1v1h-1zM920 467h1v1h-1zM921 467h1v1h-1zM922 467h1v1h-1zM923 464h1v4h-1zM924 464h1v4h-1zM925 464h1v4h-1zM926 464h1v4h-1zM927 464h1v4h-1zM928 464h1v4h-1zM929 464h1v1h-1zM930 464h1v7h-1zM931 464h1v6h-1zM932 464h1v4h-1zM933 464h1v4h-1zM934 464h1v3h-1zM935 464h1v4h-1zM936 464h1v4h-1zM937 464h1v4h-1zM938 464h1v4h-1zM939 464h1v1h-1zM940 464h1v1h-1zM941 464h1v1h-1zM942 464h1v1h-1zM943 461h1v4h-1zM944 462h1v3h-1zM945 464h1v1h-1zM946 464h1v1h-1zM947 461h1v4h-1zM948 464h1v1h-1zM949 464h1v1h-1zM950 461h1v4h-1zM951 461h1v4h-1zM952 461h1v4h-1zM953 461h1v4h-1zM954 461h1v4h-1zM955 461h1v4h-1zM956 462h1v3h-1zM957 461h1v4h-1zM958 461h1v4h-1zM959 461h1v3h-1zM960 461h1v4h-1zM961 461h1v1h-1zM962 461h1v4h-1zM963 461h1v4h-1zM964 461h1v3h-1zM965 461h1v4h-1zM966 461h1v3h-1zM967 461h1v4h-1zM968 461h1v1h-1zM969 461h1v4h-1zM970 461h1v1h-1zM971 461h1v1h-1zM972 461h1v1h-1zM973 461h1v1h-1zM974 461h1v1h-1zM975 461h1v1h-1zM976 457h1v5h-1zM977 461h1v1h-1zM978 461h1v1h-1zM979 461h1v1h-1zM980 461h1v1h-1zM981 457h1v5h-1zM982 457h1v5h-1zM983 457h1v5h-1zM984 457h1v5h-1zM985 457h1v5h-1zM986 461h1v1h-1zM987 461h1v1h-1zM988 457h1v5h-1zM989 461h1v1h-1zM990 457h1v5h-1zM991 461h1v1h-1zM992 457h1v5h-1zM993 457h1v5h-1zM994 457h1v5h-1zM995 457h1v5h-1zM996 457h1v5h-1zM997 457h1v5h-1zM998 457h1v5h-1zM999 457h1v5h-1zM1000 457h1v5h-1zM1001 457h1v5h-1zM1002 457h1v5h-1zM1003 457h1v1h-1zM1004 457h1v5h-1zM1005 457h1v1h-1zM1006 457h1v5h-1zM1007 457h1v5h-1zM1008 457h1v1h-1zM1009 457h1v1h-1zM1010 457h1v5h-1zM1011 457h1v4h-1zM1012 457h1v1h-1zM1013 457h1v1h-1zM1014 457h1v1h-1zM1015 457h1v5h-1zM1016 457h1v5h-1zM1017 457h1v4h-1zM1018 457h1v1h-1zM1019 457h1v1h-1zM1020 457h1v1h-1zM1021 457h1v1h-1zM1022 457h1v1h-1zM1023 454h1v4h-1zM1024 455h1v3h-1zM1025 457h1v1h-1zM1026 457h1v1h-1zM1027 457h1v1h-1zM1028 454h1v4h-1zM1029 457h1v1h-1zM1030 457h1v1h-1zM1031 457h1v1h-1zM1032 457h1v1h-1zM1033 457h1v1h-1zM1034 457h1v1h-1zM1035 454h1v4h-1zM1036 457h1v1h-1zM1037 454h1v4h-1zM1038 457h1v1h-1zM1039 457h1v1h-1zM1040 457h1v1h-1zM1041 454h1v4h-1zM1042 454h1v4h-1zM1043 454h1v4h-1zM1044 457h1v1h-1zM1045 454h1v4h-1zM1046 457h1v1h-1zM1047 454h1v4h-1zM1048 454h1v4h-1zM1049 454h1v4h-1zM1050 454h1v4h-1zM1051 454h1v4h-1zM1052 454h1v4h-1zM1053 454h1v4h-1zM1054 454h1v4h-1zM1055 455h1v3h-1zM1056 457h1v1h-1zM1057 454h1v4h-1zM1058 454h1v4h-1zM1059 454h1v4h-1zM1060 454h1v4h-1zM1061 454h1v1h-1zM1062 451h1v7h-1zM1063 452h1v3h-1zM1064 454h1v1h-1zM1065 454h1v1h-1zM1066 450h1v6h-1z" fill="#00ff00"/>
  <path d="M631 205h15v1h-15zM638 198h1v16h-1z" fill="#fff"/>
 </g>
 <!-- mini overview -->
 <g fill="none" stroke-width="1.2">
  <polyline points="482,91 485,88 486,87" stroke="#fff"/>
  <polyline points="486,87 487,88 488,89 489,90 490,91 491,92 492,91 493,90 494,89 495,88 496,87 497,88 498,89 499,90 500,91 501,92 502,91 503,90 504,89 505,88 506,87 507,88 508,89 509,90 510,91 511,92 512,91 513,90 514,89 515,88 516,87 517,88 518,89 519,90 520,91 521,92 522,91 523,90 524,89 525,88 526,87 527,88 528,89 529,90 530,91 531,92 532,91 533,90 534,89 535,88 536,87 537,88 538,89 539,90 540,91 541,92 542,91 543,90 544,89 545,88 546,87 547,88 548,89 549,90 550,91 551,92 552,91 553,90 554,89 555,88 556,87 557,88 558,89 559,90 560,91 561,92 562,91 563,90 564,89 565,88 566,87 567,88 568,89 569,90 570,91 571,92 572,91 573,90 574,89 575,88 576,87 577,88 578,89 579,90 580,91 581,92 582,91" stroke="#00d000"/>
  <polyline points="582,91 583,90 584,89 585,88 586,87 587,88 588,89 589,90 590,91 591,92 592,91 593,90 594,89 595,88 596,87 597,88 598,89 599,90 600,91 601,92 602,91 603,90 604,89 605,88 606,87 607,88 608,89 609,90 610,91" stroke="#fff"/>
  <path d="M483.500 82.500h-2v14h2M608.500 82.500h2v14h-2" stroke="#a8c0f8" stroke-width="1.100"/>
 </g>
 <text x="492" y="83" font-family="Liberation Sans,sans-serif" font-size="8" fill="#f0a050">T</text>
 <!-- trigger pos marker -->
 <path d="M124 105h11v8l-5.500 5.500l-5.500-5.500z" fill="#f4a460"/>
 <text x="129.500" y="113" text-anchor="middle" font-family="Liberation Sans,sans-serif" font-size="9" fill="#222">T</text>
 <!-- trigger level marker -->
 <path d="M1071 912.500l6-5.500h11v11h-11z" fill="#ffff00"/>
 <text x="1082" y="917" text-anchor="middle" font-family="Liberation Sans,sans-serif" font-size="10" fill="#222">T</text>
 <!-- channel markers -->
 <path d="M6 428h12l5.500 5.500l-5.500 5.500h-12z" fill="#00ff00"/>
 <text x="12.300" y="438.300" text-anchor="middle" font-family="Liberation Serif,serif" font-size="15" fill="#000">1</text>
 <path d="M6 941h12l5.500 5.500l-5.500 5.500h-12z" fill="#ffff00"/>
 <text x="12.500" y="951.200" text-anchor="middle" font-family="Liberation Serif,serif" font-size="15" fill="#000">2</text>
 <!-- trigger edge icon -->
 <path d="M995 94.500h4.500v-13h3.500" fill="none" stroke="#ffff00" stroke-width="1.2"/>
 <path d="M996.500 89l3-4l3 4z" fill="#ffff00"/>
 <rect x="1010" y="83" width="21" height="12" fill="#ffff00"/>
 <!-- bottom labels -->
 <rect x="7" y="981" width="27" height="15" fill="#00ff00"/>
 <path d="M34 991.500h10" stroke="#00ff00" stroke-width="1"/>
 <path d="M35 987.500h10" stroke="#00ff00" stroke-width="1" stroke-dasharray="1 2"/>
 <rect x="137" y="981" width="27" height="15" fill="#ffff00"/>
 <path d="M164 991.500h10" stroke="#ffff00" stroke-width="1"/>
 <path d="M165 987.500h10" stroke="#ffff00" stroke-width="1" stroke-dasharray="1 2"/>
</svg>
<div class="sc" style="left:1011.500px;top:82.500px;font-size:10px;letter-spacing:-.4px;color:#222">CH2</div>
<div class="sc" style="left:1039.500px;top:82px;letter-spacing:-.2px;color:#ffff00">1.62V</div>
<div class="sc" style="left:8px;top:982px;color:#000">CH1</div>
<div class="sc" style="left:48px;top:982px;color:#00ff00">50.0V</div>
<div class="sc" style="left:138px;top:982px;color:#000">CH2</div>
<div class="sc" style="left:180px;top:982px;color:#ffff00">5.00V</div>
<div class="sc" style="left:992px;top:982px;color:#f4a460">Time</div>
<div class="sc" style="left:1032px;top:982px;color:#f4a460">200us</div>
<!-- ===== right panel ===== -->
<div id="panel"></div>
<div class="abs" style="left:1088px;top:73px;width:2px;height:930px;background:#fff"></div>
<div class="abs" style="left:1088px;top:73px;width:192px;height:1px;background:#fff"></div>
<div class="gbw" style="left:1094px;top:83px;width:181px;height:99px"></div><div class="gb" style="left:1093px;top:82px;width:183px;height:99px"></div><div class="gbt" style="left:1159px;top:76px;letter-spacing:-0.11px">Horizontal</div>
<div class="gbw" style="left:1094px;top:195px;width:181px;height:221px"></div><div class="gb" style="left:1093px;top:194px;width:183px;height:221px"></div><div class="gbt" style="left:1165px;top:188px;letter-spacing:-0.11px">Vertical</div>
<div class="gbw" style="left:1094px;top:429px;width:181px;height:137px"></div><div class="gb" style="left:1093px;top:428px;width:183px;height:137px"></div><div class="gbt" style="left:1166px;top:422px;letter-spacing:-0.05px">Trigger</div>
<div class="lbl" style="left:1104px;top:90px;letter-spacing:-0.36px">Time / DIV</div>
<div class="cb " style="left:1102px;top:106px;width:63px"><b style="left:3px;letter-spacing:-0.05px">200us</b><i></i></div>
<div class="abs" style="left:1105px;top:109px;width:40px;height:16px;border:1px dotted #000"></div>
<div class="lbl" style="left:1105px;top:137px;letter-spacing:-0.28px">Format</div>
<div class="cb dis" style="left:1102px;top:152px;width:63px"><b style="left:4px;letter-spacing:0px">Y - T</b><i></i></div>
<div class="chk" style="left:1102px;top:206px"></div><svg class="abs" style="left:1102px;top:206px" width="13" height="13" viewBox="0 0 13 13"><path d="M3 6.200L5.300 9.700L10 2.600" fill="none" stroke="#4258a0" stroke-width="1.700"/></svg>
<div class="lbl" style="left:1118px;top:207px;letter-spacing:-.5px;transform:scaleX(.92);transform-origin:0 0">CH1</div>
<div class="cb " style="left:1102px;top:224px;width:60px"><b style="left:3.5px;letter-spacing:-0.15px">50.0V</b><i></i></div>
<div class="cb " style="left:1102px;top:252px;width:60px"><b style="left:3.5px;letter-spacing:-1.4px">DC</b><i></i></div>
<div class="cb " style="left:1102px;top:280px;width:60px"><b style="left:3.5px;letter-spacing:-0.3px">x 10</b><i></i></div>
<div class="chk" style="left:1101px;top:313px"></div><svg class="abs" style="left:1101px;top:313px" width="13" height="13" viewBox="0 0 13 13"><path d="M3 6.200L5.300 9.700L10 2.600" fill="none" stroke="#4258a0" stroke-width="1.700"/></svg>
<div class="lbl" style="left:1117px;top:314px;letter-spacing:-.5px;transform:scaleX(.92);transform-origin:0 0">CH2</div>
<div class="cb " style="left:1101px;top:330px;width:60px"><b style="left:3px;letter-spacing:-0.05px">5.00V</b><i></i></div>
<div class="cb " style="left:1101px;top:358px;width:60px"><b style="left:3px;letter-spacing:-1.4px">DC</b><i></i></div>
<div class="cb " style="left:1101px;top:386px;width:60px"><b style="left:3px;letter-spacing:-0.25px">x 1</b><i></i></div>
<div class="lbl" style="left:1102px;top:450px;letter-spacing:-0.2px">Trigger Mode</div>
<div class="lbl" style="left:1102px;top:480px;letter-spacing:0.05px">Trigger Sweep</div>
<div class="lbl" style="left:1102px;top:509px;letter-spacing:-0.05px">Trigger Source</div>
<div class="lbl" style="left:1102px;top:539px;letter-spacing:-0.15px">Trigger Slope</div>
<div class="cb " style="left:1195px;top:446px;width:62px"><b style="left:3.5px;letter-spacing:-0.6px">Edge</b><i></i></div>
<div class="cb " style="left:1195px;top:476px;width:62px"><b style="left:3.5px;letter-spacing:-0.42px">Normal</b><i></i></div>
<div class="cb " style="left:1195px;top:505px;width:62px"><b style="left:3.5px;letter-spacing:-1.1px">CH2</b><i></i></div>
<div class="cb " style="left:1195px;top:535px;width:62px"><b style="left:3.5px;letter-spacing:0px">+</b><i></i></div>
<svg class="abs" style="left:1088px;top:73px" width="192" height="500" viewBox="1088 73 192 500">
<path d="M1197.34 160.46A37 36.6 0 1 1 1249.66 160.46" fill="none" stroke="#000" stroke-width="1.1"/><path d="M1198.40 159.40A35.5 35.2 0 1 1 1248.60 159.40" fill="none" stroke="#fff" stroke-width="1.9"/><ellipse cx="1223.5" cy="134.3" rx="33.4" ry="33" fill="#b9b9b9" stroke="#000" stroke-width="1.2"/><path d="M1223.5 134.3L1199.51 156.67A32.8 32.4 0 1 1 1247.29 111.72z" fill="#d3d3d3"/><ellipse cx="1223.5" cy="134.3" rx="27.9" ry="26.8" fill="#3333ff" stroke="#000" stroke-width="1.2"/><path d="M1226.60 129.70L1238.30 116.80" stroke="#fff" stroke-width="1.5" stroke-linecap="round"/><path d="M1199.70 158.40L1192.40 164.70" stroke="#000" stroke-width="1.3"/><path d="M1247.30 158.40L1254.60 164.70" stroke="#000" stroke-width="1.3"/>
<path d="M1197.34 286.46A37 36.6 0 1 1 1249.66 286.46" fill="none" stroke="#000" stroke-width="1.1"/><path d="M1198.40 285.40A35.5 35.2 0 1 1 1248.60 285.40" fill="none" stroke="#fff" stroke-width="1.9"/><ellipse cx="1223.5" cy="260.3" rx="33.4" ry="33" fill="#b9b9b9" stroke="#000" stroke-width="1.2"/><path d="M1223.5 260.3L1199.51 282.67A32.8 32.4 0 1 1 1247.29 237.72z" fill="#d3d3d3"/><ellipse cx="1223.5" cy="260.3" rx="27.9" ry="26.8" fill="#00ff00" stroke="#000" stroke-width="1.2"/><path d="M1205.90 273.90L1218.40 264.70" stroke="#fff" stroke-width="1.5" stroke-linecap="round"/><path d="M1199.70 284.40L1192.40 290.70" stroke="#000" stroke-width="1.3"/><path d="M1247.30 284.40L1254.60 290.70" stroke="#000" stroke-width="1.3"/>
<path d="M1197.34 391.46A37 36.6 0 1 1 1249.66 391.46" fill="none" stroke="#000" stroke-width="1.1"/><path d="M1198.40 390.40A35.5 35.2 0 1 1 1248.60 390.40" fill="none" stroke="#fff" stroke-width="1.9"/><ellipse cx="1223.5" cy="365.3" rx="33.4" ry="33" fill="#b9b9b9" stroke="#000" stroke-width="1.2"/><path d="M1223.5 365.3L1199.51 387.67A32.8 32.4 0 1 1 1247.29 342.72z" fill="#d3d3d3"/><ellipse cx="1223.5" cy="365.3" rx="27.9" ry="26.8" fill="#ffff00" stroke="#000" stroke-width="1.2"/><path d="M1205.90 378.90L1218.40 369.70" stroke="#fff" stroke-width="1.5" stroke-linecap="round"/><path d="M1199.70 389.40L1192.40 395.70" stroke="#000" stroke-width="1.3"/><path d="M1247.30 389.40L1254.60 395.70" stroke="#000" stroke-width="1.3"/>
</svg>
<!-- ===== status bar ===== -->
<div class="abs" style="left:0;top:1001px;width:1090px;height:2px;background:#fff"></div>
<div class="abs" style="left:0;top:1003px;width:1090px;height:1px;background:#e3e3e3"></div>
<div class="abs" style="left:0;top:1004px;width:1280px;height:1px;background:#fafafa"></div>
<div class="abs" style="left:1278px;top:73px;width:1px;height:931px;background:#e3e3e3"></div>
<div class="abs" style="left:1279px;top:73px;width:1px;height:931px;background:#ececec"></div>
<div class="abs" style="left:0;top:1005px;width:1280px;height:1px;background:#a0a0a0"></div>
<div class="abs" style="left:0;top:1001px;width:1px;height:3px;background:#a0a0a0"></div>
<div class="abs" style="left:1px;top:1001px;width:1px;height:2px;background:#696969"></div>
<div id="status">
 <span style="left:2px;letter-spacing:-.1px">Connected</span>
 <span style="left:110px;letter-spacing:-.44px">Freq = 1.230 KHz</span>
 <span style="left:228px;letter-spacing:-.32px">Time = 812.680 uS</span>
 <span style="left:346px;letter-spacing:-.17px">Volt = -46.778 V</span>
 <span style="left:1176px;letter-spacing:-.43px">04-01-2016&nbsp; 15:33</span>
</div>
<div class="abs" style="left:1171px;top:1006px;width:1px;height:17px;background:#d0cccc"></div>
<div class="abs" style="left:0;top:1022px;width:1280px;height:2px;background:#f8f8f8"></div>
</body>
</html>
